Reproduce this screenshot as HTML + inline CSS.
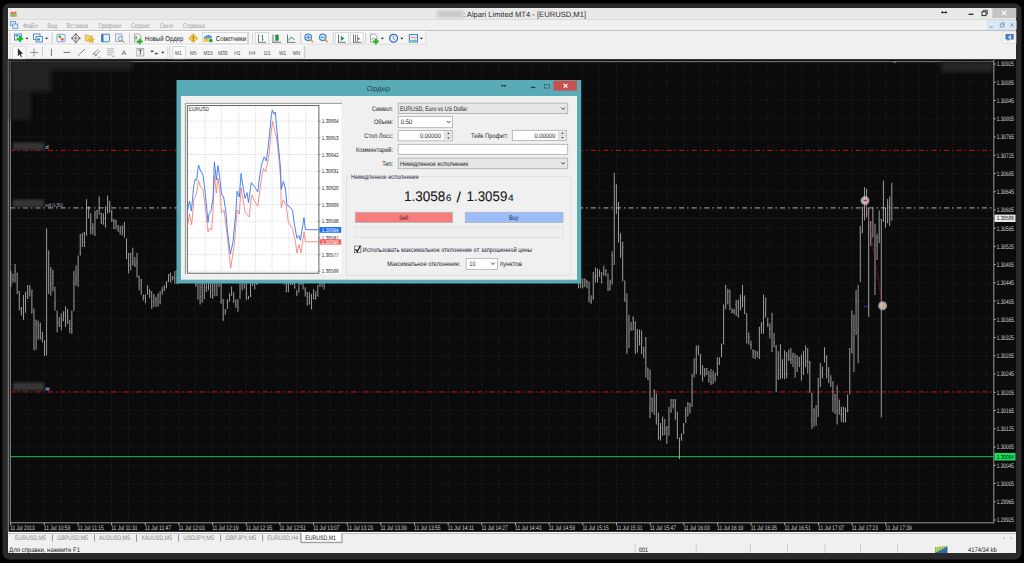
<!DOCTYPE html>
<html><head><meta charset="utf-8"><style>
html,body{margin:0;padding:0;width:1024px;height:563px;overflow:hidden;background:#000}
svg{display:block;position:absolute;left:0;top:0}
</style></head><body>
<svg width="1024" height="563" viewBox="0 0 1024 563" text-rendering="geometricPrecision">
<defs><filter id="blur" x="-20%" y="-20%" width="140%" height="140%"><feGaussianBlur stdDeviation="2.5"/></filter><filter id="blur1" x="-20%" y="-50%" width="140%" height="200%"><feGaussianBlur stdDeviation="1"/></filter><filter id="blur2" x="-20%" y="-50%" width="140%" height="200%"><feGaussianBlur stdDeviation="1.5"/></filter></defs>
<rect x="0" y="0" width="1024" height="563" fill="#000" />
<rect x="2.5" y="3.5" width="1019" height="556" fill="#2a2a2a" rx="7"/>
<rect x="8" y="8" width="1008" height="545" fill="#f0f0f0" />
<rect x="8" y="8" width="1008" height="11.5" fill="#e9e9e9" />
<line x1="8" y1="19.5" x2="1016" y2="19.5" stroke="#dadada" stroke-width="1" />
<line x1="8" y1="30.5" x2="1016" y2="30.5" stroke="#c2c2c2" stroke-width="1" />
<rect x="8" y="59" width="1008" height="473" fill="#0b0b0b" />
<line x1="8" y1="59.5" x2="1016" y2="59.5" stroke="#3a3a3a" stroke-width="1" />
<line x1="7.4" y1="60" x2="7.4" y2="532" stroke="#3c3c3c" stroke-width="1.2" />
<line x1="8.6" y1="60" x2="8.6" y2="532" stroke="#7c7c7c" stroke-width="1" />
<line x1="10.3" y1="61" x2="10.3" y2="523" stroke="#9c9c9c" stroke-width="0.9" />
<line x1="27.43" y1="61" x2="27.43" y2="522.8" stroke="#2c2c2c" stroke-width="0.8" stroke-dasharray="1 2.2"/>
<line x1="44.26" y1="61" x2="44.26" y2="522.8" stroke="#2c2c2c" stroke-width="0.8" stroke-dasharray="1 2.2"/>
<line x1="61.089999999999996" y1="61" x2="61.089999999999996" y2="522.8" stroke="#2c2c2c" stroke-width="0.8" stroke-dasharray="1 2.2"/>
<line x1="77.91999999999999" y1="61" x2="77.91999999999999" y2="522.8" stroke="#2c2c2c" stroke-width="0.8" stroke-dasharray="1 2.2"/>
<line x1="94.74999999999999" y1="61" x2="94.74999999999999" y2="522.8" stroke="#2c2c2c" stroke-width="0.8" stroke-dasharray="1 2.2"/>
<line x1="111.57999999999998" y1="61" x2="111.57999999999998" y2="522.8" stroke="#2c2c2c" stroke-width="0.8" stroke-dasharray="1 2.2"/>
<line x1="128.41" y1="61" x2="128.41" y2="522.8" stroke="#2c2c2c" stroke-width="0.8" stroke-dasharray="1 2.2"/>
<line x1="145.23999999999998" y1="61" x2="145.23999999999998" y2="522.8" stroke="#2c2c2c" stroke-width="0.8" stroke-dasharray="1 2.2"/>
<line x1="162.06999999999996" y1="61" x2="162.06999999999996" y2="522.8" stroke="#2c2c2c" stroke-width="0.8" stroke-dasharray="1 2.2"/>
<line x1="178.89999999999998" y1="61" x2="178.89999999999998" y2="522.8" stroke="#2c2c2c" stroke-width="0.8" stroke-dasharray="1 2.2"/>
<line x1="195.73" y1="61" x2="195.73" y2="522.8" stroke="#2c2c2c" stroke-width="0.8" stroke-dasharray="1 2.2"/>
<line x1="212.55999999999997" y1="61" x2="212.55999999999997" y2="522.8" stroke="#2c2c2c" stroke-width="0.8" stroke-dasharray="1 2.2"/>
<line x1="229.38999999999996" y1="61" x2="229.38999999999996" y2="522.8" stroke="#2c2c2c" stroke-width="0.8" stroke-dasharray="1 2.2"/>
<line x1="246.21999999999997" y1="61" x2="246.21999999999997" y2="522.8" stroke="#2c2c2c" stroke-width="0.8" stroke-dasharray="1 2.2"/>
<line x1="263.05" y1="61" x2="263.05" y2="522.8" stroke="#2c2c2c" stroke-width="0.8" stroke-dasharray="1 2.2"/>
<line x1="279.88" y1="61" x2="279.88" y2="522.8" stroke="#2c2c2c" stroke-width="0.8" stroke-dasharray="1 2.2"/>
<line x1="296.71" y1="61" x2="296.71" y2="522.8" stroke="#2c2c2c" stroke-width="0.8" stroke-dasharray="1 2.2"/>
<line x1="313.53999999999996" y1="61" x2="313.53999999999996" y2="522.8" stroke="#2c2c2c" stroke-width="0.8" stroke-dasharray="1 2.2"/>
<line x1="330.37" y1="61" x2="330.37" y2="522.8" stroke="#2c2c2c" stroke-width="0.8" stroke-dasharray="1 2.2"/>
<line x1="347.2" y1="61" x2="347.2" y2="522.8" stroke="#2c2c2c" stroke-width="0.8" stroke-dasharray="1 2.2"/>
<line x1="364.03" y1="61" x2="364.03" y2="522.8" stroke="#2c2c2c" stroke-width="0.8" stroke-dasharray="1 2.2"/>
<line x1="380.86" y1="61" x2="380.86" y2="522.8" stroke="#2c2c2c" stroke-width="0.8" stroke-dasharray="1 2.2"/>
<line x1="397.69" y1="61" x2="397.69" y2="522.8" stroke="#2c2c2c" stroke-width="0.8" stroke-dasharray="1 2.2"/>
<line x1="414.52" y1="61" x2="414.52" y2="522.8" stroke="#2c2c2c" stroke-width="0.8" stroke-dasharray="1 2.2"/>
<line x1="431.34999999999997" y1="61" x2="431.34999999999997" y2="522.8" stroke="#2c2c2c" stroke-width="0.8" stroke-dasharray="1 2.2"/>
<line x1="448.17999999999995" y1="61" x2="448.17999999999995" y2="522.8" stroke="#2c2c2c" stroke-width="0.8" stroke-dasharray="1 2.2"/>
<line x1="465.01" y1="61" x2="465.01" y2="522.8" stroke="#2c2c2c" stroke-width="0.8" stroke-dasharray="1 2.2"/>
<line x1="481.84" y1="61" x2="481.84" y2="522.8" stroke="#2c2c2c" stroke-width="0.8" stroke-dasharray="1 2.2"/>
<line x1="498.66999999999996" y1="61" x2="498.66999999999996" y2="522.8" stroke="#2c2c2c" stroke-width="0.8" stroke-dasharray="1 2.2"/>
<line x1="515.5" y1="61" x2="515.5" y2="522.8" stroke="#2c2c2c" stroke-width="0.8" stroke-dasharray="1 2.2"/>
<line x1="532.3299999999999" y1="61" x2="532.3299999999999" y2="522.8" stroke="#2c2c2c" stroke-width="0.8" stroke-dasharray="1 2.2"/>
<line x1="549.16" y1="61" x2="549.16" y2="522.8" stroke="#2c2c2c" stroke-width="0.8" stroke-dasharray="1 2.2"/>
<line x1="565.99" y1="61" x2="565.99" y2="522.8" stroke="#2c2c2c" stroke-width="0.8" stroke-dasharray="1 2.2"/>
<line x1="582.8199999999999" y1="61" x2="582.8199999999999" y2="522.8" stroke="#2c2c2c" stroke-width="0.8" stroke-dasharray="1 2.2"/>
<line x1="599.65" y1="61" x2="599.65" y2="522.8" stroke="#2c2c2c" stroke-width="0.8" stroke-dasharray="1 2.2"/>
<line x1="616.4799999999999" y1="61" x2="616.4799999999999" y2="522.8" stroke="#2c2c2c" stroke-width="0.8" stroke-dasharray="1 2.2"/>
<line x1="633.31" y1="61" x2="633.31" y2="522.8" stroke="#2c2c2c" stroke-width="0.8" stroke-dasharray="1 2.2"/>
<line x1="650.14" y1="61" x2="650.14" y2="522.8" stroke="#2c2c2c" stroke-width="0.8" stroke-dasharray="1 2.2"/>
<line x1="666.9699999999999" y1="61" x2="666.9699999999999" y2="522.8" stroke="#2c2c2c" stroke-width="0.8" stroke-dasharray="1 2.2"/>
<line x1="683.8" y1="61" x2="683.8" y2="522.8" stroke="#2c2c2c" stroke-width="0.8" stroke-dasharray="1 2.2"/>
<line x1="700.63" y1="61" x2="700.63" y2="522.8" stroke="#2c2c2c" stroke-width="0.8" stroke-dasharray="1 2.2"/>
<line x1="717.4599999999999" y1="61" x2="717.4599999999999" y2="522.8" stroke="#2c2c2c" stroke-width="0.8" stroke-dasharray="1 2.2"/>
<line x1="734.29" y1="61" x2="734.29" y2="522.8" stroke="#2c2c2c" stroke-width="0.8" stroke-dasharray="1 2.2"/>
<line x1="751.12" y1="61" x2="751.12" y2="522.8" stroke="#2c2c2c" stroke-width="0.8" stroke-dasharray="1 2.2"/>
<line x1="767.9499999999999" y1="61" x2="767.9499999999999" y2="522.8" stroke="#2c2c2c" stroke-width="0.8" stroke-dasharray="1 2.2"/>
<line x1="784.78" y1="61" x2="784.78" y2="522.8" stroke="#2c2c2c" stroke-width="0.8" stroke-dasharray="1 2.2"/>
<line x1="801.6099999999999" y1="61" x2="801.6099999999999" y2="522.8" stroke="#2c2c2c" stroke-width="0.8" stroke-dasharray="1 2.2"/>
<line x1="818.4399999999999" y1="61" x2="818.4399999999999" y2="522.8" stroke="#2c2c2c" stroke-width="0.8" stroke-dasharray="1 2.2"/>
<line x1="835.27" y1="61" x2="835.27" y2="522.8" stroke="#2c2c2c" stroke-width="0.8" stroke-dasharray="1 2.2"/>
<line x1="852.0999999999999" y1="61" x2="852.0999999999999" y2="522.8" stroke="#2c2c2c" stroke-width="0.8" stroke-dasharray="1 2.2"/>
<line x1="868.93" y1="61" x2="868.93" y2="522.8" stroke="#2c2c2c" stroke-width="0.8" stroke-dasharray="1 2.2"/>
<line x1="885.7599999999999" y1="61" x2="885.7599999999999" y2="522.8" stroke="#2c2c2c" stroke-width="0.8" stroke-dasharray="1 2.2"/>
<line x1="902.5899999999999" y1="61" x2="902.5899999999999" y2="522.8" stroke="#2c2c2c" stroke-width="0.8" stroke-dasharray="1 2.2"/>
<line x1="919.42" y1="61" x2="919.42" y2="522.8" stroke="#2c2c2c" stroke-width="0.8" stroke-dasharray="1 2.2"/>
<line x1="936.2499999999999" y1="61" x2="936.2499999999999" y2="522.8" stroke="#2c2c2c" stroke-width="0.8" stroke-dasharray="1 2.2"/>
<line x1="953.0799999999999" y1="61" x2="953.0799999999999" y2="522.8" stroke="#2c2c2c" stroke-width="0.8" stroke-dasharray="1 2.2"/>
<line x1="969.91" y1="61" x2="969.91" y2="522.8" stroke="#2c2c2c" stroke-width="0.8" stroke-dasharray="1 2.2"/>
<line x1="986.7399999999999" y1="61" x2="986.7399999999999" y2="522.8" stroke="#2c2c2c" stroke-width="0.8" stroke-dasharray="1 2.2"/>
<line x1="11" y1="64.0" x2="993.8" y2="64.0" stroke="#2c2c2c" stroke-width="0.8" stroke-dasharray="1 2.2"/>
<line x1="11" y1="82.24" x2="993.8" y2="82.24" stroke="#2c2c2c" stroke-width="0.8" stroke-dasharray="1 2.2"/>
<line x1="11" y1="100.47999999999999" x2="993.8" y2="100.47999999999999" stroke="#2c2c2c" stroke-width="0.8" stroke-dasharray="1 2.2"/>
<line x1="11" y1="118.72" x2="993.8" y2="118.72" stroke="#2c2c2c" stroke-width="0.8" stroke-dasharray="1 2.2"/>
<line x1="11" y1="136.95999999999998" x2="993.8" y2="136.95999999999998" stroke="#2c2c2c" stroke-width="0.8" stroke-dasharray="1 2.2"/>
<line x1="11" y1="155.2" x2="993.8" y2="155.2" stroke="#2c2c2c" stroke-width="0.8" stroke-dasharray="1 2.2"/>
<line x1="11" y1="173.44" x2="993.8" y2="173.44" stroke="#2c2c2c" stroke-width="0.8" stroke-dasharray="1 2.2"/>
<line x1="11" y1="191.68" x2="993.8" y2="191.68" stroke="#2c2c2c" stroke-width="0.8" stroke-dasharray="1 2.2"/>
<line x1="11" y1="209.92" x2="993.8" y2="209.92" stroke="#2c2c2c" stroke-width="0.8" stroke-dasharray="1 2.2"/>
<line x1="11" y1="228.16" x2="993.8" y2="228.16" stroke="#2c2c2c" stroke-width="0.8" stroke-dasharray="1 2.2"/>
<line x1="11" y1="246.39999999999998" x2="993.8" y2="246.39999999999998" stroke="#2c2c2c" stroke-width="0.8" stroke-dasharray="1 2.2"/>
<line x1="11" y1="264.64" x2="993.8" y2="264.64" stroke="#2c2c2c" stroke-width="0.8" stroke-dasharray="1 2.2"/>
<line x1="11" y1="282.88" x2="993.8" y2="282.88" stroke="#2c2c2c" stroke-width="0.8" stroke-dasharray="1 2.2"/>
<line x1="11" y1="301.12" x2="993.8" y2="301.12" stroke="#2c2c2c" stroke-width="0.8" stroke-dasharray="1 2.2"/>
<line x1="11" y1="319.36" x2="993.8" y2="319.36" stroke="#2c2c2c" stroke-width="0.8" stroke-dasharray="1 2.2"/>
<line x1="11" y1="337.59999999999997" x2="993.8" y2="337.59999999999997" stroke="#2c2c2c" stroke-width="0.8" stroke-dasharray="1 2.2"/>
<line x1="11" y1="355.84" x2="993.8" y2="355.84" stroke="#2c2c2c" stroke-width="0.8" stroke-dasharray="1 2.2"/>
<line x1="11" y1="374.08" x2="993.8" y2="374.08" stroke="#2c2c2c" stroke-width="0.8" stroke-dasharray="1 2.2"/>
<line x1="11" y1="392.32" x2="993.8" y2="392.32" stroke="#2c2c2c" stroke-width="0.8" stroke-dasharray="1 2.2"/>
<line x1="11" y1="410.55999999999995" x2="993.8" y2="410.55999999999995" stroke="#2c2c2c" stroke-width="0.8" stroke-dasharray="1 2.2"/>
<line x1="11" y1="428.79999999999995" x2="993.8" y2="428.79999999999995" stroke="#2c2c2c" stroke-width="0.8" stroke-dasharray="1 2.2"/>
<line x1="11" y1="447.03999999999996" x2="993.8" y2="447.03999999999996" stroke="#2c2c2c" stroke-width="0.8" stroke-dasharray="1 2.2"/>
<line x1="11" y1="465.28" x2="993.8" y2="465.28" stroke="#2c2c2c" stroke-width="0.8" stroke-dasharray="1 2.2"/>
<line x1="11" y1="483.52" x2="993.8" y2="483.52" stroke="#2c2c2c" stroke-width="0.8" stroke-dasharray="1 2.2"/>
<line x1="11" y1="501.76" x2="993.8" y2="501.76" stroke="#2c2c2c" stroke-width="0.8" stroke-dasharray="1 2.2"/>
<line x1="11" y1="520.0" x2="993.8" y2="520.0" stroke="#2c2c2c" stroke-width="0.8" stroke-dasharray="1 2.2"/>
<line x1="10" y1="61.6" x2="993.8" y2="61.6" stroke="#8a8a8a" stroke-width="0.9" />
<path d="M893.2 61.2 H896.2 L894.7 63.4Z" fill="#8a8a8a"/>
<g filter="url(#blur)"><rect x="10" y="60" width="122" height="10" fill="#202020"/><rect x="11" y="69" width="40" height="23" fill="#222"/><rect x="11" y="90" width="20" height="30" fill="#1f1f1f"/></g>
<g filter="url(#blur)"><rect x="941" y="62" width="52" height="10" fill="#262626"/></g>
<line x1="993.8" y1="60" x2="993.8" y2="523.3" stroke="#9a9a9a" stroke-width="1" />
<line x1="10" y1="522.8" x2="993.8" y2="522.8" stroke="#9a9a9a" stroke-width="1" />
<line x1="993.8" y1="64.0" x2="995.8" y2="64.0" stroke="#aaa" stroke-width="1" />
<text x="996.7" y="66.41" font-size="6.6" fill="#d4d4d4" text-anchor="start" font-family="Liberation Sans" font-weight="normal" textLength="17.3" lengthAdjust="spacingAndGlyphs" >1.30925</text>
<line x1="993.8" y1="82.24" x2="995.8" y2="82.24" stroke="#aaa" stroke-width="1" />
<text x="996.7" y="84.65" font-size="6.6" fill="#d4d4d4" text-anchor="start" font-family="Liberation Sans" font-weight="normal" textLength="17.3" lengthAdjust="spacingAndGlyphs" >1.30885</text>
<line x1="993.8" y1="100.47999999999999" x2="995.8" y2="100.47999999999999" stroke="#aaa" stroke-width="1" />
<text x="996.7" y="102.89" font-size="6.6" fill="#d4d4d4" text-anchor="start" font-family="Liberation Sans" font-weight="normal" textLength="17.3" lengthAdjust="spacingAndGlyphs" >1.30845</text>
<line x1="993.8" y1="118.72" x2="995.8" y2="118.72" stroke="#aaa" stroke-width="1" />
<text x="996.7" y="121.13" font-size="6.6" fill="#d4d4d4" text-anchor="start" font-family="Liberation Sans" font-weight="normal" textLength="17.3" lengthAdjust="spacingAndGlyphs" >1.30805</text>
<line x1="993.8" y1="136.95999999999998" x2="995.8" y2="136.95999999999998" stroke="#aaa" stroke-width="1" />
<text x="996.7" y="139.37" font-size="6.6" fill="#d4d4d4" text-anchor="start" font-family="Liberation Sans" font-weight="normal" textLength="17.3" lengthAdjust="spacingAndGlyphs" >1.30765</text>
<line x1="993.8" y1="155.2" x2="995.8" y2="155.2" stroke="#aaa" stroke-width="1" />
<text x="996.7" y="157.61" font-size="6.6" fill="#d4d4d4" text-anchor="start" font-family="Liberation Sans" font-weight="normal" textLength="17.3" lengthAdjust="spacingAndGlyphs" >1.30725</text>
<line x1="993.8" y1="173.44" x2="995.8" y2="173.44" stroke="#aaa" stroke-width="1" />
<text x="996.7" y="175.85" font-size="6.6" fill="#d4d4d4" text-anchor="start" font-family="Liberation Sans" font-weight="normal" textLength="17.3" lengthAdjust="spacingAndGlyphs" >1.30685</text>
<line x1="993.8" y1="191.68" x2="995.8" y2="191.68" stroke="#aaa" stroke-width="1" />
<text x="996.7" y="194.09" font-size="6.6" fill="#d4d4d4" text-anchor="start" font-family="Liberation Sans" font-weight="normal" textLength="17.3" lengthAdjust="spacingAndGlyphs" >1.30645</text>
<line x1="993.8" y1="209.92" x2="995.8" y2="209.92" stroke="#aaa" stroke-width="1" />
<text x="996.7" y="212.33" font-size="6.6" fill="#d4d4d4" text-anchor="start" font-family="Liberation Sans" font-weight="normal" textLength="17.3" lengthAdjust="spacingAndGlyphs" >1.30605</text>
<line x1="993.8" y1="228.16" x2="995.8" y2="228.16" stroke="#aaa" stroke-width="1" />
<text x="996.7" y="230.57" font-size="6.6" fill="#d4d4d4" text-anchor="start" font-family="Liberation Sans" font-weight="normal" textLength="17.3" lengthAdjust="spacingAndGlyphs" >1.30565</text>
<line x1="993.8" y1="246.39999999999998" x2="995.8" y2="246.39999999999998" stroke="#aaa" stroke-width="1" />
<text x="996.7" y="248.81" font-size="6.6" fill="#d4d4d4" text-anchor="start" font-family="Liberation Sans" font-weight="normal" textLength="17.3" lengthAdjust="spacingAndGlyphs" >1.30525</text>
<line x1="993.8" y1="264.64" x2="995.8" y2="264.64" stroke="#aaa" stroke-width="1" />
<text x="996.7" y="267.05" font-size="6.6" fill="#d4d4d4" text-anchor="start" font-family="Liberation Sans" font-weight="normal" textLength="17.3" lengthAdjust="spacingAndGlyphs" >1.30485</text>
<line x1="993.8" y1="282.88" x2="995.8" y2="282.88" stroke="#aaa" stroke-width="1" />
<text x="996.7" y="285.29" font-size="6.6" fill="#d4d4d4" text-anchor="start" font-family="Liberation Sans" font-weight="normal" textLength="17.3" lengthAdjust="spacingAndGlyphs" >1.30445</text>
<line x1="993.8" y1="301.12" x2="995.8" y2="301.12" stroke="#aaa" stroke-width="1" />
<text x="996.7" y="303.53" font-size="6.6" fill="#d4d4d4" text-anchor="start" font-family="Liberation Sans" font-weight="normal" textLength="17.3" lengthAdjust="spacingAndGlyphs" >1.30405</text>
<line x1="993.8" y1="319.36" x2="995.8" y2="319.36" stroke="#aaa" stroke-width="1" />
<text x="996.7" y="321.77" font-size="6.6" fill="#d4d4d4" text-anchor="start" font-family="Liberation Sans" font-weight="normal" textLength="17.3" lengthAdjust="spacingAndGlyphs" >1.30365</text>
<line x1="993.8" y1="337.59999999999997" x2="995.8" y2="337.59999999999997" stroke="#aaa" stroke-width="1" />
<text x="996.7" y="340.01" font-size="6.6" fill="#d4d4d4" text-anchor="start" font-family="Liberation Sans" font-weight="normal" textLength="17.3" lengthAdjust="spacingAndGlyphs" >1.30325</text>
<line x1="993.8" y1="355.84" x2="995.8" y2="355.84" stroke="#aaa" stroke-width="1" />
<text x="996.7" y="358.25" font-size="6.6" fill="#d4d4d4" text-anchor="start" font-family="Liberation Sans" font-weight="normal" textLength="17.3" lengthAdjust="spacingAndGlyphs" >1.30285</text>
<line x1="993.8" y1="374.08" x2="995.8" y2="374.08" stroke="#aaa" stroke-width="1" />
<text x="996.7" y="376.49" font-size="6.6" fill="#d4d4d4" text-anchor="start" font-family="Liberation Sans" font-weight="normal" textLength="17.3" lengthAdjust="spacingAndGlyphs" >1.30245</text>
<line x1="993.8" y1="392.32" x2="995.8" y2="392.32" stroke="#aaa" stroke-width="1" />
<text x="996.7" y="394.73" font-size="6.6" fill="#d4d4d4" text-anchor="start" font-family="Liberation Sans" font-weight="normal" textLength="17.3" lengthAdjust="spacingAndGlyphs" >1.30205</text>
<line x1="993.8" y1="410.55999999999995" x2="995.8" y2="410.55999999999995" stroke="#aaa" stroke-width="1" />
<text x="996.7" y="412.97" font-size="6.6" fill="#d4d4d4" text-anchor="start" font-family="Liberation Sans" font-weight="normal" textLength="17.3" lengthAdjust="spacingAndGlyphs" >1.30165</text>
<line x1="993.8" y1="428.79999999999995" x2="995.8" y2="428.79999999999995" stroke="#aaa" stroke-width="1" />
<text x="996.7" y="431.21" font-size="6.6" fill="#d4d4d4" text-anchor="start" font-family="Liberation Sans" font-weight="normal" textLength="17.3" lengthAdjust="spacingAndGlyphs" >1.30125</text>
<line x1="993.8" y1="447.03999999999996" x2="995.8" y2="447.03999999999996" stroke="#aaa" stroke-width="1" />
<text x="996.7" y="449.45" font-size="6.6" fill="#d4d4d4" text-anchor="start" font-family="Liberation Sans" font-weight="normal" textLength="17.3" lengthAdjust="spacingAndGlyphs" >1.30085</text>
<line x1="993.8" y1="465.28" x2="995.8" y2="465.28" stroke="#aaa" stroke-width="1" />
<text x="996.7" y="467.69" font-size="6.6" fill="#d4d4d4" text-anchor="start" font-family="Liberation Sans" font-weight="normal" textLength="17.3" lengthAdjust="spacingAndGlyphs" >1.30045</text>
<line x1="993.8" y1="483.52" x2="995.8" y2="483.52" stroke="#aaa" stroke-width="1" />
<text x="996.7" y="485.93" font-size="6.6" fill="#d4d4d4" text-anchor="start" font-family="Liberation Sans" font-weight="normal" textLength="17.3" lengthAdjust="spacingAndGlyphs" >1.30005</text>
<line x1="993.8" y1="501.76" x2="995.8" y2="501.76" stroke="#aaa" stroke-width="1" />
<text x="996.7" y="504.17" font-size="6.6" fill="#d4d4d4" text-anchor="start" font-family="Liberation Sans" font-weight="normal" textLength="17.3" lengthAdjust="spacingAndGlyphs" >1.29965</text>
<line x1="993.8" y1="520.0" x2="995.8" y2="520.0" stroke="#aaa" stroke-width="1" />
<text x="996.7" y="522.41" font-size="6.6" fill="#d4d4d4" text-anchor="start" font-family="Liberation Sans" font-weight="normal" textLength="17.3" lengthAdjust="spacingAndGlyphs" >1.29925</text>
<line x1="10.6" y1="522.8" x2="10.6" y2="525.3" stroke="#aaa" stroke-width="1" />
<text x="10.2" y="530.01" font-size="6.6" fill="#d4d4d4" text-anchor="start" font-family="Liberation Sans" font-weight="normal" textLength="24.5" lengthAdjust="spacingAndGlyphs" >11 Jul 2013</text>
<line x1="44.26" y1="522.8" x2="44.26" y2="525.3" stroke="#aaa" stroke-width="1" />
<text x="43.86" y="530.01" font-size="6.6" fill="#d4d4d4" text-anchor="start" font-family="Liberation Sans" font-weight="normal" textLength="26.3" lengthAdjust="spacingAndGlyphs" >11 Jul 10:59</text>
<line x1="77.91999999999999" y1="522.8" x2="77.91999999999999" y2="525.3" stroke="#aaa" stroke-width="1" />
<text x="77.51999999999998" y="530.01" font-size="6.6" fill="#d4d4d4" text-anchor="start" font-family="Liberation Sans" font-weight="normal" textLength="26.3" lengthAdjust="spacingAndGlyphs" >11 Jul 11:15</text>
<line x1="111.57999999999998" y1="522.8" x2="111.57999999999998" y2="525.3" stroke="#aaa" stroke-width="1" />
<text x="111.17999999999998" y="530.01" font-size="6.6" fill="#d4d4d4" text-anchor="start" font-family="Liberation Sans" font-weight="normal" textLength="26.3" lengthAdjust="spacingAndGlyphs" >11 Jul 11:31</text>
<line x1="145.23999999999998" y1="522.8" x2="145.23999999999998" y2="525.3" stroke="#aaa" stroke-width="1" />
<text x="144.83999999999997" y="530.01" font-size="6.6" fill="#d4d4d4" text-anchor="start" font-family="Liberation Sans" font-weight="normal" textLength="26.3" lengthAdjust="spacingAndGlyphs" >11 Jul 11:47</text>
<line x1="178.89999999999998" y1="522.8" x2="178.89999999999998" y2="525.3" stroke="#aaa" stroke-width="1" />
<text x="178.49999999999997" y="530.01" font-size="6.6" fill="#d4d4d4" text-anchor="start" font-family="Liberation Sans" font-weight="normal" textLength="26.3" lengthAdjust="spacingAndGlyphs" >11 Jul 12:03</text>
<line x1="212.55999999999997" y1="522.8" x2="212.55999999999997" y2="525.3" stroke="#aaa" stroke-width="1" />
<text x="212.15999999999997" y="530.01" font-size="6.6" fill="#d4d4d4" text-anchor="start" font-family="Liberation Sans" font-weight="normal" textLength="26.3" lengthAdjust="spacingAndGlyphs" >11 Jul 12:19</text>
<line x1="246.21999999999997" y1="522.8" x2="246.21999999999997" y2="525.3" stroke="#aaa" stroke-width="1" />
<text x="245.81999999999996" y="530.01" font-size="6.6" fill="#d4d4d4" text-anchor="start" font-family="Liberation Sans" font-weight="normal" textLength="26.3" lengthAdjust="spacingAndGlyphs" >11 Jul 12:35</text>
<line x1="279.88" y1="522.8" x2="279.88" y2="525.3" stroke="#aaa" stroke-width="1" />
<text x="279.48" y="530.01" font-size="6.6" fill="#d4d4d4" text-anchor="start" font-family="Liberation Sans" font-weight="normal" textLength="26.3" lengthAdjust="spacingAndGlyphs" >11 Jul 12:51</text>
<line x1="313.53999999999996" y1="522.8" x2="313.53999999999996" y2="525.3" stroke="#aaa" stroke-width="1" />
<text x="313.14" y="530.01" font-size="6.6" fill="#d4d4d4" text-anchor="start" font-family="Liberation Sans" font-weight="normal" textLength="26.3" lengthAdjust="spacingAndGlyphs" >11 Jul 13:07</text>
<line x1="347.2" y1="522.8" x2="347.2" y2="525.3" stroke="#aaa" stroke-width="1" />
<text x="346.8" y="530.01" font-size="6.6" fill="#d4d4d4" text-anchor="start" font-family="Liberation Sans" font-weight="normal" textLength="26.3" lengthAdjust="spacingAndGlyphs" >11 Jul 13:23</text>
<line x1="380.86" y1="522.8" x2="380.86" y2="525.3" stroke="#aaa" stroke-width="1" />
<text x="380.46000000000004" y="530.01" font-size="6.6" fill="#d4d4d4" text-anchor="start" font-family="Liberation Sans" font-weight="normal" textLength="26.3" lengthAdjust="spacingAndGlyphs" >11 Jul 13:39</text>
<line x1="414.52" y1="522.8" x2="414.52" y2="525.3" stroke="#aaa" stroke-width="1" />
<text x="414.12" y="530.01" font-size="6.6" fill="#d4d4d4" text-anchor="start" font-family="Liberation Sans" font-weight="normal" textLength="26.3" lengthAdjust="spacingAndGlyphs" >11 Jul 13:55</text>
<line x1="448.17999999999995" y1="522.8" x2="448.17999999999995" y2="525.3" stroke="#aaa" stroke-width="1" />
<text x="447.78" y="530.01" font-size="6.6" fill="#d4d4d4" text-anchor="start" font-family="Liberation Sans" font-weight="normal" textLength="26.3" lengthAdjust="spacingAndGlyphs" >11 Jul 14:11</text>
<line x1="481.84" y1="522.8" x2="481.84" y2="525.3" stroke="#aaa" stroke-width="1" />
<text x="481.44" y="530.01" font-size="6.6" fill="#d4d4d4" text-anchor="start" font-family="Liberation Sans" font-weight="normal" textLength="26.3" lengthAdjust="spacingAndGlyphs" >11 Jul 14:27</text>
<line x1="515.5" y1="522.8" x2="515.5" y2="525.3" stroke="#aaa" stroke-width="1" />
<text x="515.1" y="530.01" font-size="6.6" fill="#d4d4d4" text-anchor="start" font-family="Liberation Sans" font-weight="normal" textLength="26.3" lengthAdjust="spacingAndGlyphs" >11 Jul 14:43</text>
<line x1="549.16" y1="522.8" x2="549.16" y2="525.3" stroke="#aaa" stroke-width="1" />
<text x="548.76" y="530.01" font-size="6.6" fill="#d4d4d4" text-anchor="start" font-family="Liberation Sans" font-weight="normal" textLength="26.3" lengthAdjust="spacingAndGlyphs" >11 Jul 14:59</text>
<line x1="582.8199999999999" y1="522.8" x2="582.8199999999999" y2="525.3" stroke="#aaa" stroke-width="1" />
<text x="582.42" y="530.01" font-size="6.6" fill="#d4d4d4" text-anchor="start" font-family="Liberation Sans" font-weight="normal" textLength="26.3" lengthAdjust="spacingAndGlyphs" >11 Jul 15:15</text>
<line x1="616.4799999999999" y1="522.8" x2="616.4799999999999" y2="525.3" stroke="#aaa" stroke-width="1" />
<text x="616.0799999999999" y="530.01" font-size="6.6" fill="#d4d4d4" text-anchor="start" font-family="Liberation Sans" font-weight="normal" textLength="26.3" lengthAdjust="spacingAndGlyphs" >11 Jul 15:31</text>
<line x1="650.14" y1="522.8" x2="650.14" y2="525.3" stroke="#aaa" stroke-width="1" />
<text x="649.74" y="530.01" font-size="6.6" fill="#d4d4d4" text-anchor="start" font-family="Liberation Sans" font-weight="normal" textLength="26.3" lengthAdjust="spacingAndGlyphs" >11 Jul 15:47</text>
<line x1="683.8" y1="522.8" x2="683.8" y2="525.3" stroke="#aaa" stroke-width="1" />
<text x="683.4" y="530.01" font-size="6.6" fill="#d4d4d4" text-anchor="start" font-family="Liberation Sans" font-weight="normal" textLength="26.3" lengthAdjust="spacingAndGlyphs" >11 Jul 16:03</text>
<line x1="717.4599999999999" y1="522.8" x2="717.4599999999999" y2="525.3" stroke="#aaa" stroke-width="1" />
<text x="717.06" y="530.01" font-size="6.6" fill="#d4d4d4" text-anchor="start" font-family="Liberation Sans" font-weight="normal" textLength="26.3" lengthAdjust="spacingAndGlyphs" >11 Jul 16:19</text>
<line x1="751.12" y1="522.8" x2="751.12" y2="525.3" stroke="#aaa" stroke-width="1" />
<text x="750.72" y="530.01" font-size="6.6" fill="#d4d4d4" text-anchor="start" font-family="Liberation Sans" font-weight="normal" textLength="26.3" lengthAdjust="spacingAndGlyphs" >11 Jul 16:35</text>
<line x1="784.78" y1="522.8" x2="784.78" y2="525.3" stroke="#aaa" stroke-width="1" />
<text x="784.38" y="530.01" font-size="6.6" fill="#d4d4d4" text-anchor="start" font-family="Liberation Sans" font-weight="normal" textLength="26.3" lengthAdjust="spacingAndGlyphs" >11 Jul 16:51</text>
<line x1="818.4399999999999" y1="522.8" x2="818.4399999999999" y2="525.3" stroke="#aaa" stroke-width="1" />
<text x="818.04" y="530.01" font-size="6.6" fill="#d4d4d4" text-anchor="start" font-family="Liberation Sans" font-weight="normal" textLength="26.3" lengthAdjust="spacingAndGlyphs" >11 Jul 17:07</text>
<line x1="852.0999999999999" y1="522.8" x2="852.0999999999999" y2="525.3" stroke="#aaa" stroke-width="1" />
<text x="851.6999999999999" y="530.01" font-size="6.6" fill="#d4d4d4" text-anchor="start" font-family="Liberation Sans" font-weight="normal" textLength="26.3" lengthAdjust="spacingAndGlyphs" >11 Jul 17:23</text>
<line x1="885.7599999999999" y1="522.8" x2="885.7599999999999" y2="525.3" stroke="#aaa" stroke-width="1" />
<text x="885.3599999999999" y="530.01" font-size="6.6" fill="#d4d4d4" text-anchor="start" font-family="Liberation Sans" font-weight="normal" textLength="26.3" lengthAdjust="spacingAndGlyphs" >11 Jul 17:39</text>
<line x1="10.2" y1="150.4" x2="993.8" y2="150.4" stroke="#a41010" stroke-width="1.1" stroke-dasharray="5.1 2.85 1.6 3.07"/>
<line x1="10.2" y1="207.8" x2="993.8" y2="207.8" stroke="#8c8c8c" stroke-width="1.3" stroke-dasharray="5.1 2.85 1.6 3.07"/>
<line x1="10.2" y1="391.9" x2="993.8" y2="391.9" stroke="#a41010" stroke-width="1.1" stroke-dasharray="5.1 2.85 1.6 3.07"/>
<line x1="11" y1="456.6" x2="993.8" y2="456.6" stroke="#1e9c4a" stroke-width="1.3" />
<line x1="11" y1="218.5" x2="993.8" y2="218.5" stroke="#191919" stroke-width="1.2" />
<g filter="url(#blur1)"><rect x="13" y="142.5" width="31" height="7.5" fill="#363636"/><rect x="13" y="199.5" width="31" height="7.5" fill="#363636"/><rect x="13" y="382.5" width="31" height="8" fill="#363636"/></g>
<text x="45.3" y="148.70" font-size="5.5" fill="#c8c8c8" text-anchor="start" font-family="Liberation Sans" font-weight="normal" textLength="3.4" lengthAdjust="spacingAndGlyphs" >d</text>
<text x="45.3" y="207.30" font-size="5.5" fill="#b0b8c8" text-anchor="start" font-family="Liberation Sans" font-weight="normal" textLength="17.4" lengthAdjust="spacingAndGlyphs" >xd 0.50</text>
<path d="M45.5 387.5 h4 v3 h-4z" fill="#5a7ab0"/>
<rect x="994.5" y="214.6" width="21" height="7.4" fill="#e8e8e8" />
<text x="996.7" y="220.49" font-size="6" fill="#111" text-anchor="start" font-family="Liberation Sans" font-weight="normal" textLength="17.3" lengthAdjust="spacingAndGlyphs" >1.30586</text>
<rect x="994.5" y="452.9" width="21" height="7.6" fill="#19e060" />
<text x="996.7" y="458.79" font-size="6" fill="#0b0b0b" text-anchor="start" font-family="Liberation Sans" font-weight="normal" textLength="17.3" lengthAdjust="spacingAndGlyphs" >1.30064</text>
<path d="M10.86 271.0V287.0M12.96 274.0V282.5M15.06 264.0V282.5M17.17 272.6V294.0M19.27 291.0V310.5M21.37 307.0V315.5M23.48 295.0V319.8M25.58 291.7V312.7M27.68 285.0V299.0M29.78 285.0V296.7M31.88 289.6V313.4M33.99 308.4V350.3M36.09 319.8V349.6M38.19 320.5V339.7M40.30 322.6V339.7M42.40 331.8V342.5M44.50 340.4V356.0M46.60 228.5V355.3M48.70 250.5V294.0M50.81 267.0V295.6M52.91 269.7V291.4M55.01 286.8V310.5M57.12 310.5V332.4M59.22 317.0V326.9M61.32 313.4V330.4M63.42 311.2V321.2M65.53 306.3V326.9M67.63 309.0V324.0M69.73 319.8V333.3M71.83 310.5V334.0M73.94 271.0V311.2M76.04 265.5V285.8M78.14 255.5V286.8M80.24 234.0V255.5M82.34 232.8V247.0M84.45 232.0V247.0M86.55 199.2V235.4M88.65 206.3V218.4M90.75 213.1V234.3M92.86 223.4V234.7M94.96 210.6V236.0M97.06 209.9V219.0M99.17 196.4V214.8M101.27 212.7V224.0M103.37 213.4V224.8M105.47 206.3V227.6M107.58 195.7V213.4M109.68 200.6V212.7M111.78 209.9V221.9M113.88 219.0V229.0M115.98 220.0V229.5M118.09 224.8V231.9M120.19 226.2V234.7M122.29 225.5V235.4M124.39 221.9V237.6M126.50 238.3V258.9M128.60 252.8V273.4M130.70 252.8V270.5M132.81 247.8V265.6M134.91 257.0V267.0M137.01 252.8V277.6M139.11 275.5V290.4M141.21 279.0V294.7M143.32 294.7V300.4M145.42 294.7V303.2M147.52 285.5V294.7M149.62 289.0V298.2M151.73 291.1V308.9M153.83 294.0V306.8M155.93 296.8V306.8M158.04 293.3V306.8M160.14 291.0V304.0M162.24 286.9V294.7M164.34 285.7V291.1M166.44 281.2V288.3M168.55 274.0V282.0M170.65 272.7V282.6M172.75 276.2V280.5M174.86 271.2V284.0M176.96 270.0V284.0M195.88 270.0V286.9M197.98 270.0V299.6M200.08 270.0V304.6M202.19 270.0V302.9M204.29 276.0V299.3M206.39 270.0V291.8M208.50 270.0V290.4M210.60 270.0V298.0M212.70 270.0V298.9M214.80 270.0V296.2M216.91 270.0V295.8M219.01 270.0V286.9M221.11 270.0V303.8M223.21 298.9V320.6M225.31 309.0V314.4M227.42 299.3V309.0M229.52 293.5V301.5M231.62 286.4V295.8M233.73 292.2V302.9M235.83 299.3V307.8M237.93 299.3V311.7M240.03 270.0V298.9M242.13 270.0V290.4M244.24 270.0V288.7M246.34 270.0V299.8M248.44 295.8V299.3M250.55 270.0V297.1M252.65 270.0V286.0M254.75 270.0V289.5M256.85 270.0V285.1M284.19 270.0V284.7M286.29 270.0V292.2M288.39 270.0V292.2M290.49 270.0V285.1M292.60 270.0V285.1M294.70 270.0V288.7M296.80 290.0V295.8M298.90 270.0V292.7M301.00 270.0V285.0M303.11 270.0V289.5M305.21 287.3V296.6M307.31 291.8V305.5M309.42 292.2V304.6M311.52 294.0V309.5M313.62 289.1V299.3M315.72 291.3V299.8M317.83 285.1V296.6M319.93 270.0V286.9M322.03 270.0V286.9M324.13 270.0V289.5M578.53 270.0V288.3M580.64 274.2V288.3M582.74 278.4V288.3M584.84 278.4V286.9M586.95 279.8V288.3M589.05 281.5V302.3M591.15 295.4V303.9M593.25 272.0V299.7M595.36 267.7V282.6M597.46 268.4V282.6M599.56 269.8V277.0M601.66 272.0V283.3M603.76 265.6V275.5M605.87 269.1V276.2M607.97 273.4V291.1M610.07 279.8V290.4M612.18 251.4V284.7M614.28 172.8V264.9M616.38 184.2V214.0M618.48 202.0V242.8M620.59 233.2V257.8M622.69 241.7V281.2M624.79 280.5V301.8M626.89 293.3V354.0M629.00 315.0V348.3M631.10 322.0V330.5M633.20 316.3V330.5M635.30 321.3V354.0M637.40 329.0V352.6M639.51 329.8V345.5M641.61 330.5V354.0M643.71 346.9V358.2M645.82 337.0V377.4M647.92 367.5V380.0M650.02 369.6V418.2M652.12 397.4V412.6M654.23 389.4V415.0M656.33 393.4V424.6M658.43 412.6V439.8M660.53 423.0V440.6M662.63 416.6V435.8M664.74 419.0V435.0M666.84 426.2V443.8M668.94 407.0V435.8M671.05 399.0V412.6M673.15 399.0V408.6M675.25 399.0V419.8M677.35 411.8V439.0M679.46 437.4V459.0M681.56 433.4V440.6M683.66 423.0V434.2M685.76 407.0V423.0M687.87 402.2V416.6M689.97 403.0V413.4M692.07 373.8V407.0M694.17 358.2V377.4M696.27 345.4V373.9M698.38 345.4V355.3M700.48 354.2V374.8M702.58 365.0V381.6M704.69 368.0V376.8M706.79 368.0V374.8M708.89 370.9V382.6M710.99 369.0V385.0M713.10 370.4V384.1M715.20 372.8V381.6M717.30 357.2V375.8M719.40 357.2V365.0M721.50 343.5V357.2M723.61 304.4V344.5M725.71 284.8V309.2M727.81 288.7V304.4M729.92 289.7V310.2M732.02 308.3V313.2M734.12 309.2V314.1M736.22 300.0V316.0M738.33 299.7V317.6M740.43 294.6V310.2M742.53 284.8V307.3M744.63 295.5V314.1M746.74 313.2V343.5M748.84 332.7V344.5M750.94 340.6V349.4M753.04 349.4V358.2M755.14 350.3V359.1M757.25 351.3V357.2M759.35 326.9V359.1M761.45 322.0V333.7M763.56 294.6V333.7M765.66 297.5V317.6M767.76 317.6V326.9M769.86 323.2V338.5M771.97 312.8V352.0M774.07 332.8V347.2M776.17 344.8V392.0M778.27 351.2V380.0M780.38 344.0V379.2M782.48 359.2V378.4M784.58 350.4V379.2M786.68 352.0V378.4M788.79 349.6V360.8M790.89 348.0V364.0M792.99 352.8V367.2M795.09 353.6V377.6M797.20 355.2V372.0M799.30 356.8V367.2M801.40 354.4V380.6M803.50 351.2V375.2M805.61 345.6V367.1M807.71 348.0V373.6M809.81 360.8V392.7M811.91 392.7V428.9M814.01 408.3V426.8M816.12 405.1V425.7M818.22 377.8V416.8M820.32 362.8V387.2M822.43 366.4V378.4M824.53 347.2V362.4M826.63 355.2V378.4M828.73 367.1V383.2M830.84 375.2V387.0M832.94 381.3V412.2M835.04 394.0V414.0M837.14 385.4V424.6M839.25 399.6V414.7M841.35 406.7V421.8M843.45 406.7V422.7M845.55 407.6V422.5M847.65 394.3V412.0M849.76 348.0V394.3M851.86 310.4V353.4M853.96 314.6V372.0M856.07 289.8V335.0M858.17 284.8V363.2M860.27 226.0V282.0M862.37 206.3V233.2M864.48 187.1V220.5M866.58 188.5V217.6M868.68 207.7V316.8M870.78 221.2V246.0M872.88 207.7V237.5M874.99 223.7V295.0M877.09 234.0V260.0M879.19 210.5V243.2M881.30 219.0V417.4M883.40 180.7V221.9M885.50 207.7V227.6M887.60 199.1V223.3M889.71 196.3V226.1M891.81 182.8V220.5" stroke="#b6b6b6" stroke-width="0.85" fill="none"/>
<path d="M9.96 276.2H10.86M10.86 273.4H11.76M12.06 279.5H12.96M12.96 274.6H13.86M14.16 273.9H15.06M15.06 270.8H15.96M16.27 273.8H17.17M17.17 283.5H18.07M18.37 291.7H19.27M19.27 299.5H20.17M20.47 307.6H21.37M21.37 307.8H22.27M22.58 305.5H23.48M23.48 315.5H24.38M24.68 294.3H25.58M25.58 296.4H26.48M26.78 293.8H27.68M27.68 298.3H28.58M28.88 291.8H29.78M29.78 289.6H30.68M30.98 312.8H31.88M31.88 290.7H32.78M33.09 344.4H33.99M33.99 320.5H34.89M35.19 324.1H36.09M36.09 323.3H36.99M37.29 326.4H38.19M38.19 336.2H39.09M39.40 325.7H40.30M40.30 332.5H41.20M41.50 338.6H42.40M42.40 335.8H43.30M43.60 348.9H44.50M44.50 341.4H45.40M45.70 236.1H46.60M46.60 254.6H47.50M47.80 280.1H48.70M48.70 269.1H49.60M49.91 276.0H50.81M50.81 283.7H51.71M52.01 279.5H52.91M52.91 276.2H53.81M54.11 305.6H55.01M55.01 303.4H55.91M56.22 315.9H57.12M57.12 323.1H58.02M58.32 322.2H59.22M59.22 325.7H60.12M60.42 325.8H61.32M61.32 318.3H62.22M62.52 321.0H63.42M63.42 312.4H64.32M64.62 314.9H65.53M65.53 321.9H66.43M66.73 311.3H67.63M67.63 316.3H68.53M68.83 320.3H69.73M69.73 328.8H70.63M70.93 328.5H71.83M71.83 324.0H72.73M73.03 306.2H73.94M73.94 283.6H74.84M75.14 279.6H76.04M76.04 277.5H76.94M77.24 273.7H78.14M78.14 269.8H79.04M79.34 252.1H80.24M80.24 254.3H81.14M81.44 239.5H82.34M82.34 242.2H83.25M83.55 232.9H84.45M84.45 242.5H85.35M85.65 222.6H86.55M86.55 235.2H87.45M87.75 216.2H88.65M88.65 209.7H89.55M89.85 221.3H90.75M90.75 227.3H91.66M91.96 223.7H92.86M92.86 228.6H93.76M94.06 214.9H94.96M94.96 213.6H95.86M96.16 210.4H97.06M97.06 216.9H97.96M98.27 198.8H99.17M99.17 201.0H100.07M100.37 217.1H101.27M101.27 222.5H102.17M102.47 214.3H103.37M103.37 218.5H104.27M104.57 218.0H105.47M105.47 225.1H106.37M106.67 210.2H107.58M107.58 211.0H108.48M108.78 204.0H109.68M109.68 205.6H110.58M110.88 214.2H111.78M111.78 220.5H112.68M112.98 228.6H113.88M113.88 220.5H114.78M115.08 221.7H115.98M115.98 222.2H116.89M117.19 226.5H118.09M118.09 228.2H118.99M119.29 231.2H120.19M120.19 228.4H121.09M121.39 225.5H122.29M122.29 229.6H123.19M123.49 227.7H124.39M124.39 230.8H125.30M125.60 257.9H126.50M126.50 252.5H127.40M127.70 263.4H128.60M128.60 265.5H129.50M129.80 264.8H130.70M130.70 253.8H131.60M131.91 263.8H132.81M132.81 261.7H133.71M134.01 265.7H134.91M134.91 265.0H135.81M136.11 262.5H137.01M137.01 262.7H137.91M138.21 277.0H139.11M139.11 285.0H140.01M140.31 280.0H141.21M141.21 280.1H142.11M142.42 295.9H143.32M143.32 295.6H144.22M144.52 297.6H145.42M145.42 295.1H146.32M146.62 285.5H147.52M147.52 286.9H148.42M148.72 289.9H149.62M149.62 292.3H150.53M150.83 291.6H151.73M151.73 306.7H152.63M152.93 301.9H153.83M153.83 295.9H154.73M155.03 299.3H155.93M155.93 300.3H156.83M157.14 298.2H158.04M158.04 295.0H158.94M159.24 302.0H160.14M160.14 303.9H161.04M161.34 290.5H162.24M162.24 290.7H163.14M163.44 286.1H164.34M164.34 286.2H165.24M165.54 283.6H166.44M166.44 283.1H167.34M167.65 280.6H168.55M168.55 275.3H169.45M169.75 272.9H170.65M170.65 282.1H171.55M171.85 278.5H172.75M172.75 276.8H173.65M173.96 278.2H174.86M174.86 271.5H175.76M176.06 277.4H176.96M176.96 283.7H177.86M194.98 284.6H195.88M195.88 281.8H196.78M197.08 277.7H197.98M197.98 280.8H198.88M199.18 275.8H200.08M200.08 296.7H200.98M201.29 287.5H202.19M202.19 295.6H203.09M203.39 283.7H204.29M204.29 281.2H205.19M205.49 287.7H206.39M206.39 291.5H207.29M207.59 287.4H208.50M208.50 286.4H209.40M209.70 292.9H210.60M210.60 290.7H211.50M211.80 276.6H212.70M212.70 285.0H213.60M213.90 279.3H214.80M214.80 270.8H215.70M216.01 270.7H216.91M216.91 277.2H217.81M218.11 274.4H219.01M219.01 281.7H219.91M220.21 302.3H221.11M221.11 285.1H222.01M222.31 319.2H223.21M223.21 320.3H224.11M224.41 314.2H225.31M225.31 311.0H226.22M226.52 301.4H227.42M227.42 301.5H228.32M228.62 295.1H229.52M229.52 295.1H230.42M230.72 292.3H231.62M231.62 294.9H232.52M232.83 301.2H233.73M233.73 297.3H234.63M234.93 304.9H235.83M235.83 306.1H236.73M237.03 300.4H237.93M237.93 307.5H238.83M239.13 296.3H240.03M240.03 292.6H240.93M241.23 285.3H242.13M242.13 279.8H243.03M243.34 273.3H244.24M244.24 284.8H245.14M245.44 279.9H246.34M246.34 293.9H247.24M247.54 299.2H248.44M248.44 297.2H249.34M249.65 280.9H250.55M250.55 295.7H251.45M251.75 281.6H252.65M252.65 272.7H253.55M253.85 272.5H254.75M254.75 272.9H255.65M255.95 283.7H256.85M256.85 282.2H257.75M283.29 272.1H284.19M284.19 282.1H285.08M285.39 291.8H286.29M286.29 284.6H287.19M287.49 277.8H288.39M288.39 282.2H289.29M289.59 272.0H290.49M290.49 270.2H291.39M291.70 284.7H292.60M292.60 279.8H293.50M293.80 279.8H294.70M294.70 287.5H295.60M295.90 292.5H296.80M296.80 295.1H297.70M298.00 288.8H298.90M298.90 274.8H299.80M300.11 273.8H301.00M301.00 274.4H301.90M302.21 274.7H303.11M303.11 281.4H304.01M304.31 289.7H305.21M305.21 291.2H306.11M306.41 293.6H307.31M307.31 304.3H308.21M308.52 296.6H309.42M309.42 297.9H310.31M310.62 303.0H311.52M311.52 308.0H312.42M312.72 293.4H313.62M313.62 298.5H314.52M314.82 295.6H315.72M315.72 295.8H316.62M316.93 291.1H317.83M317.83 285.3H318.73M319.03 277.4H319.93M319.93 273.1H320.83M321.13 270.1H322.03M322.03 283.5H322.93M323.23 273.4H324.13M324.13 279.2H325.03M577.63 283.3H578.53M578.53 280.2H579.43M579.74 278.8H580.64M580.64 281.5H581.54M581.84 283.9H582.74M582.74 286.2H583.64M583.94 279.3H584.84M584.84 283.2H585.74M586.05 281.9H586.95M586.95 282.2H587.85M588.15 297.6H589.05M589.05 292.1H589.95M590.25 300.2H591.15M591.15 301.9H592.05M592.35 297.3H593.25M593.25 284.3H594.15M594.46 276.8H595.36M595.36 275.2H596.25M596.56 275.7H597.46M597.46 278.2H598.36M598.66 273.1H599.56M599.56 273.6H600.46M600.76 277.4H601.66M601.66 282.6H602.56M602.87 272.5H603.76M603.76 274.3H604.66M604.97 275.8H605.87M605.87 270.9H606.77M607.07 283.3H607.97M607.97 290.1H608.87M609.17 288.7H610.07M610.07 281.3H610.97M611.28 255.5H612.18M612.18 266.1H613.08M613.38 179.5H614.28M614.28 195.0H615.18M615.48 186.4H616.38M616.38 204.2H617.28M617.58 234.0H618.48M618.48 238.6H619.38M619.69 237.0H620.59M620.59 250.8H621.49M621.79 267.8H622.69M622.69 247.3H623.59M623.89 299.3H624.79M624.79 301.1H625.69M625.99 306.6H626.89M626.89 351.1H627.79M628.10 328.3H629.00M629.00 331.2H629.89M630.20 330.4H631.10M631.10 329.1H632.00M632.30 318.6H633.20M633.20 322.4H634.10M634.40 338.2H635.30M635.30 332.4H636.20M636.50 333.6H637.40M637.40 336.5H638.30M638.61 341.1H639.51M639.51 330.1H640.41M640.71 343.5H641.61M641.61 340.9H642.51M642.81 347.1H643.71M643.71 350.6H644.61M644.92 362.2H645.82M645.82 357.7H646.72M647.02 368.3H647.92M647.92 379.8H648.82M649.12 407.9H650.02M650.02 416.8H650.92M651.22 399.0H652.12M652.12 401.4H653.02M653.33 390.4H654.23M654.23 409.3H655.12M655.43 401.8H656.33M656.33 397.4H657.23M657.53 424.1H658.43M658.43 437.4H659.33M659.63 437.4H660.53M660.53 427.6H661.43M661.74 419.5H662.63M662.63 434.2H663.53M663.84 428.1H664.74M664.74 430.2H665.64M665.94 427.8H666.84M666.84 427.2H667.74M668.04 426.8H668.94M668.94 419.2H669.84M670.15 400.0H671.05M671.05 411.8H671.95M672.25 405.1H673.15M673.15 406.7H674.05M674.35 400.7H675.25M675.25 416.8H676.15M676.45 413.6H677.35M677.35 435.3H678.25M678.56 447.2H679.46M679.46 444.7H680.36M680.66 437.4H681.56M681.56 440.1H682.46M682.76 426.0H683.66M683.66 424.4H684.56M684.86 415.4H685.76M685.76 410.8H686.66M686.97 403.8H687.87M687.87 404.5H688.76M689.07 403.5H689.97M689.97 405.1H690.87M691.17 384.2H692.07M692.07 383.9H692.97M693.27 372.8H694.17M694.17 363.8H695.07M695.38 359.7H696.27M696.27 350.5H697.17M697.48 348.8H698.38M698.38 345.6H699.28M699.58 359.4H700.48M700.48 354.5H701.38M701.68 377.2H702.58M702.58 374.1H703.48M703.79 369.7H704.69M704.69 372.2H705.59M705.89 374.4H706.79M706.79 368.7H707.69M707.99 380.5H708.89M708.89 376.0H709.79M710.09 376.9H710.99M710.99 382.4H711.89M712.20 375.8H713.10M713.10 377.4H714.00M714.30 378.9H715.20M715.20 381.4H716.10M716.40 363.6H717.30M717.30 372.7H718.20M718.50 362.7H719.40M719.40 362.2H720.30M720.61 349.0H721.50M721.50 348.3H722.40M722.71 306.6H723.61M723.61 309.6H724.51M724.81 286.5H725.71M725.71 302.9H726.61M726.91 292.7H727.81M727.81 291.3H728.71M729.02 291.4H729.92M729.92 306.9H730.82M731.12 312.6H732.02M732.02 311.6H732.92M733.22 310.6H734.12M734.12 310.4H735.02M735.32 304.7H736.22M736.22 307.4H737.12M737.43 302.5H738.33M738.33 307.6H739.23M739.53 298.7H740.43M740.43 309.6H741.33M741.63 306.7H742.53M742.53 297.1H743.43M743.73 300.0H744.63M744.63 313.5H745.53M745.84 322.6H746.74M746.74 324.0H747.63M747.94 332.7H748.84M748.84 337.2H749.74M750.04 344.8H750.94M750.94 345.0H751.84M752.14 351.2H753.04M753.04 353.8H753.94M754.25 350.3H755.14M755.14 352.6H756.04M756.35 351.8H757.25M757.25 353.7H758.15M758.45 328.2H759.35M759.35 327.6H760.25M760.55 325.6H761.45M761.45 324.7H762.35M762.66 317.5H763.56M763.56 315.3H764.46M764.76 312.6H765.66M765.66 310.7H766.56M766.86 324.3H767.76M767.76 325.8H768.66M768.96 329.2H769.86M769.86 328.2H770.76M771.07 351.4H771.97M771.97 318.7H772.87M773.17 343.2H774.07M774.07 342.1H774.97M775.27 346.9H776.17M776.17 384.2H777.07M777.37 376.9H778.27M778.27 369.3H779.17M779.48 369.8H780.38M780.38 372.6H781.27M781.58 361.9H782.48M782.48 369.3H783.38M783.68 364.9H784.58M784.58 374.4H785.48M785.78 373.2H786.68M786.68 373.8H787.58M787.89 356.1H788.79M788.79 359.6H789.69M789.99 358.9H790.89M790.89 359.1H791.79M792.09 356.1H792.99M792.99 353.2H793.89M794.19 356.8H795.09M795.09 362.3H795.99M796.30 357.0H797.20M797.20 369.2H798.10M798.40 362.6H799.30M799.30 363.3H800.20M800.50 370.8H801.40M801.40 372.2H802.30M802.60 362.9H803.50M803.50 351.3H804.40M804.71 362.8H805.61M805.61 361.7H806.50M806.81 360.9H807.71M807.71 361.7H808.61M808.91 381.8H809.81M809.81 362.9H810.71M811.01 419.4H811.91M811.91 401.8H812.81M813.12 409.7H814.01M814.01 413.2H814.91M815.22 420.1H816.12M816.12 409.3H817.02M817.32 406.7H818.22M818.22 415.9H819.12M819.42 374.9H820.32M820.32 372.1H821.22M821.53 372.1H822.43M822.43 374.6H823.33M823.63 358.9H824.53M824.53 356.6H825.43M825.73 370.1H826.63M826.63 357.0H827.53M827.83 369.5H828.73M828.73 371.2H829.63M829.94 384.0H830.84M830.84 378.8H831.74M832.04 398.9H832.94M832.94 381.7H833.84M834.14 395.2H835.04M835.04 399.4H835.94M836.24 411.7H837.14M837.14 412.5H838.04M838.35 409.8H839.25M839.25 404.0H840.14M840.45 414.5H841.35M841.35 413.7H842.25M842.55 414.2H843.45M843.45 408.6H844.35M844.65 420.9H845.55M845.55 410.6H846.45M846.75 411.6H847.65M847.65 410.9H848.55M848.86 348.8H849.76M849.76 369.3H850.66M850.96 345.7H851.86M851.86 352.0H852.76M853.06 340.4H853.96M853.96 330.0H854.86M855.17 299.3H856.07M856.07 332.5H856.97M857.27 301.3H858.17M858.17 330.4H859.07M859.37 233.9H860.27M860.27 255.3H861.17M861.47 231.9H862.37M862.37 209.9H863.27M863.58 214.5H864.48M864.48 204.1H865.38M865.68 214.3H866.58M866.58 209.0H867.48M867.78 232.9H868.68M868.68 305.6H869.58M869.88 233.3H870.78M870.78 221.8H871.68M871.99 207.8H872.88M872.88 222.4H873.78M874.09 255.8H874.99M874.99 245.2H875.89M876.19 237.7H877.09M877.09 242.9H877.99M878.29 220.8H879.19M879.19 238.0H880.09M880.40 219.3H881.30M881.30 367.9H882.20M882.50 215.3H883.40M883.40 185.6H884.30M884.60 226.1H885.50M885.50 221.9H886.40M886.70 220.9H887.60M887.60 206.1H888.50M888.81 207.4H889.71M889.71 208.0H890.61M890.91 220.5H891.81M891.81 205.0H892.71" stroke="#b6b6b6" stroke-width="0.7" fill="none" opacity="0.6"/>
<line x1="865.5" y1="200.6" x2="882.6" y2="305.6" stroke="#e02020" stroke-width="0.8" stroke-dasharray="1.2 1.2"/>
<circle cx="865" cy="200.6" r="4.5" fill="#b8b8b8" opacity="0.8"/><circle cx="865" cy="200.6" r="3" fill="#d0d0d0" opacity="0.6"/><path d="M863.3 200.2 L866.5 199.5 L867.2 201.3 L864.5 201.4Z" fill="#e82020"/>
<circle cx="882.6" cy="305.8" r="4.5" fill="#b8b8b8" opacity="0.8"/><circle cx="882.6" cy="305.8" r="3" fill="#d0d0d0" opacity="0.6"/><path d="M882.2 303.8 L883.8 305.8 L882.2 307.8Z" fill="#f0a010"/>
<line x1="864" y1="306.5" x2="868" y2="306.5" stroke="#2030c0" stroke-width="1" />
<rect x="8" y="532" width="1008" height="21" fill="#f0f0f0" />
<line x1="8" y1="532.3" x2="1016" y2="532.3" stroke="#ffffff" stroke-width="0.8" />
<line x1="8" y1="533.4" x2="1016" y2="533.4" stroke="#a8a8a8" stroke-width="0.7" />
<rect x="8" y="543" width="1008" height="10" fill="#f0f0f0" />
<text x="15.0" y="540.13" font-size="6.4" fill="#8a8a8a" text-anchor="start" font-family="Liberation Sans" font-weight="normal" textLength="31" lengthAdjust="spacingAndGlyphs" >EURUSD,M5</text>
<line x1="52.400000000000006" y1="534.5" x2="52.400000000000006" y2="541.5" stroke="#8a8a8a" stroke-width="0.9" />
<text x="57.05" y="540.13" font-size="6.4" fill="#8a8a8a" text-anchor="start" font-family="Liberation Sans" font-weight="normal" textLength="31" lengthAdjust="spacingAndGlyphs" >GBPUSD,M5</text>
<line x1="94.45" y1="534.5" x2="94.45" y2="541.5" stroke="#8a8a8a" stroke-width="0.9" />
<text x="99.1" y="540.13" font-size="6.4" fill="#8a8a8a" text-anchor="start" font-family="Liberation Sans" font-weight="normal" textLength="31" lengthAdjust="spacingAndGlyphs" >AUDUSD,M5</text>
<line x1="136.5" y1="534.5" x2="136.5" y2="541.5" stroke="#8a8a8a" stroke-width="0.9" />
<text x="141.15" y="540.13" font-size="6.4" fill="#8a8a8a" text-anchor="start" font-family="Liberation Sans" font-weight="normal" textLength="31" lengthAdjust="spacingAndGlyphs" >XAUUSD,M5</text>
<line x1="178.55" y1="534.5" x2="178.55" y2="541.5" stroke="#8a8a8a" stroke-width="0.9" />
<text x="183.2" y="540.13" font-size="6.4" fill="#8a8a8a" text-anchor="start" font-family="Liberation Sans" font-weight="normal" textLength="31" lengthAdjust="spacingAndGlyphs" >USDJPY,M5</text>
<line x1="220.59999999999997" y1="534.5" x2="220.59999999999997" y2="541.5" stroke="#8a8a8a" stroke-width="0.9" />
<text x="225.25" y="540.13" font-size="6.4" fill="#8a8a8a" text-anchor="start" font-family="Liberation Sans" font-weight="normal" textLength="31" lengthAdjust="spacingAndGlyphs" >GBPJPY,M5</text>
<line x1="262.65" y1="534.5" x2="262.65" y2="541.5" stroke="#8a8a8a" stroke-width="0.9" />
<text x="267.3" y="540.13" font-size="6.4" fill="#8a8a8a" text-anchor="start" font-family="Liberation Sans" font-weight="normal" textLength="31" lengthAdjust="spacingAndGlyphs" >EURUSD,H4</text>
<line x1="304.7" y1="534.5" x2="304.7" y2="541.5" stroke="#8a8a8a" stroke-width="0.9" />
<rect x="300.7" y="532.6" width="41.6" height="9.9" fill="#ffffff" />
<path d="M300.9 533 V542.3 H342 V533" fill="none" stroke="#6a6a6a" stroke-width="0.9"/><path d="M301.5 543 H342.6 V533.5" fill="none" stroke="#c8c8c8" stroke-width="0.7"/>
<text x="305.3" y="540.13" font-size="6.4" fill="#1a1a1a" text-anchor="start" font-family="Liberation Sans" font-weight="normal" textLength="30.7" lengthAdjust="spacingAndGlyphs" >EURUSD,M1</text>
<text x="1003" y="540.19" font-size="6" fill="#777" text-anchor="start" font-family="Liberation Sans" font-weight="normal" >‹</text>
<text x="1010" y="540.19" font-size="6" fill="#777" text-anchor="start" font-family="Liberation Sans" font-weight="normal" >›</text>
<text x="9.1" y="552.01" font-size="6.6" fill="#1a1a1a" text-anchor="start" font-family="Liberation Sans" font-weight="normal" textLength="70.9" lengthAdjust="spacingAndGlyphs" >Для справки, нажмите F1</text>
<line x1="635.2" y1="544" x2="635.2" y2="553" stroke="#c8c8c8" stroke-width="0.9" />
<line x1="696.3" y1="544" x2="696.3" y2="553" stroke="#c8c8c8" stroke-width="0.9" />
<line x1="750.4" y1="544" x2="750.4" y2="553" stroke="#c8c8c8" stroke-width="0.9" />
<line x1="787.5" y1="544" x2="787.5" y2="553" stroke="#c8c8c8" stroke-width="0.9" />
<line x1="825" y1="544" x2="825" y2="553" stroke="#c8c8c8" stroke-width="0.9" />
<line x1="860.5" y1="544" x2="860.5" y2="553" stroke="#c8c8c8" stroke-width="0.9" />
<line x1="897.5" y1="544" x2="897.5" y2="553" stroke="#c8c8c8" stroke-width="0.9" />
<text x="639" y="552.13" font-size="6.4" fill="#1a1a1a" text-anchor="start" font-family="Liberation Sans" font-weight="normal" textLength="9" lengthAdjust="spacingAndGlyphs" >001</text>
<text x="968" y="552.21" font-size="6.6" fill="#1a1a1a" text-anchor="start" font-family="Liberation Sans" font-weight="normal" textLength="28.75" lengthAdjust="spacingAndGlyphs" >4174/34 kb</text>
<g><rect x="935.0" y="547.0" width="1.5" height="6.0" fill="#8cb82c"/><rect x="937.1" y="546.8" width="1.5" height="6.2" fill="#8cb82c"/><rect x="939.2" y="546.6" width="1.5" height="6.4" fill="#8cb82c"/><rect x="941.3" y="546.4" width="1.5" height="6.6" fill="#8cb82c"/><rect x="943.4" y="546.2" width="1.5" height="6.8" fill="#8cb82c"/><rect x="945.5" y="546.0" width="1.5" height="7.0" fill="#8cb82c"/><path d="M935 553 L947.5 546.5 L947.5 553Z" fill="#2e6ea8"/></g>
<g><rect x="10" y="10" width="7" height="7" fill="#fff" stroke="#ddd" stroke-width="0.5"/><path d="M10.5 16.5 V12 L12 11 L13.5 12.5 L15 11 L16.5 12 V16.5Z" fill="#e87060"/><path d="M10.5 16.5 V14 L12 13.5 L13.5 14.5 L15 13.5 L16.5 14 V16.5Z" fill="#90c060"/></g>
<rect x="437" y="10.5" width="26" height="7" fill="#c8c8c8" filter="url(#blur2)"/>
<text x="463" y="16.67" font-size="7.6" fill="#2a2a2a" text-anchor="start" font-family="Liberation Sans" font-weight="normal" textLength="123" lengthAdjust="spacingAndGlyphs" >: Alpari Limited MT4 - [EURUSD,M1]</text>
<path d="M941.5 12.4 H947" stroke="#222" stroke-width="1"/><path d="M941 12.4 L943 11 V13.8Z M947.5 12.4 L945.5 11 V13.8Z" fill="#222"/>
<rect x="968.6" y="13.6" width="4.8" height="1.4" fill="#333" />
<rect x="982" y="11.6" width="4" height="4" fill="none" stroke="#333" stroke-width="1"/><path d="M983.5 11.6 V10.2 H987.4 V14 H986" fill="none" stroke="#333" stroke-width="0.8"/>
<rect x="992.3" y="8" width="24" height="10" fill="#c4c4c4" />
<path d="M1002 10.8 L1006.4 15.2 M1006.4 10.8 L1002 15.2" stroke="#fff" stroke-width="1.1"/>
<g><rect x="10.5" y="21.5" width="5" height="4" fill="#dceaf8" stroke="#4a86c8" stroke-width="0.7"/><rect x="12.8" y="24" width="5" height="4.5" fill="#dceaf8" stroke="#4a86c8" stroke-width="0.7"/></g>
<text x="22.9" y="27.88" font-size="6.8" fill="#a0a0a0" text-anchor="start" font-family="Liberation Sans" font-weight="normal" textLength="14.9" lengthAdjust="spacingAndGlyphs" >Файл</text>
<text x="47.2" y="27.88" font-size="6.8" fill="#a0a0a0" text-anchor="start" font-family="Liberation Sans" font-weight="normal" textLength="9.9" lengthAdjust="spacingAndGlyphs" >Вид</text>
<text x="66.6" y="27.88" font-size="6.8" fill="#a0a0a0" text-anchor="start" font-family="Liberation Sans" font-weight="normal" textLength="21.6" lengthAdjust="spacingAndGlyphs" >Вставка</text>
<text x="98.4" y="27.88" font-size="6.8" fill="#a0a0a0" text-anchor="start" font-family="Liberation Sans" font-weight="normal" textLength="22.8" lengthAdjust="spacingAndGlyphs" >Графики</text>
<text x="130.7" y="27.88" font-size="6.8" fill="#a0a0a0" text-anchor="start" font-family="Liberation Sans" font-weight="normal" textLength="19.4" lengthAdjust="spacingAndGlyphs" >Сервис</text>
<text x="159.7" y="27.88" font-size="6.8" fill="#a0a0a0" text-anchor="start" font-family="Liberation Sans" font-weight="normal" textLength="13.5" lengthAdjust="spacingAndGlyphs" >Окно</text>
<text x="182.8" y="27.88" font-size="6.8" fill="#a0a0a0" text-anchor="start" font-family="Liberation Sans" font-weight="normal" textLength="22.1" lengthAdjust="spacingAndGlyphs" >Справка</text>
<rect x="987.4" y="20.7" width="8.3" height="8.7" fill="#dbe9f7" stroke="#c5d9ee" stroke-width="0.6"/>
<rect x="997.8" y="20.7" width="8.3" height="8.7" fill="#dbe9f7" stroke="#c5d9ee" stroke-width="0.6"/>
<rect x="1007.9" y="20.7" width="8.3" height="8.7" fill="#dbe9f7" stroke="#c5d9ee" stroke-width="0.6"/>
<rect x="989.8" y="26.4" width="3" height="0.9" fill="#6c88a8" />
<rect x="1000.2" y="24" width="3" height="3" fill="none" stroke="#6c88a8" stroke-width="0.7"/><path d="M1001.4 24 V22.8 H1004.4 V25.8 H1003.2" fill="none" stroke="#6c88a8" stroke-width="0.6"/>
<path d="M1010.4 23.2 L1013.6 26.8 M1013.6 23.2 L1010.4 26.8" stroke="#6c88a8" stroke-width="0.8"/>
<rect x="8" y="31" width="241" height="13.600000000000001" fill="#f5f5f5" />
<line x1="8" y1="31.5" x2="249" y2="31.5" stroke="#ffffff" stroke-width="1" />
<line x1="248.5" y1="32" x2="248.5" y2="44.6" stroke="#d8d8d8" stroke-width="1" />
<line x1="8" y1="44.1" x2="249" y2="44.1" stroke="#dedede" stroke-width="1" />
<rect x="249.5" y="31" width="176.89999999999998" height="13.600000000000001" fill="#f5f5f5" />
<line x1="249.5" y1="31.5" x2="426.4" y2="31.5" stroke="#ffffff" stroke-width="1" />
<line x1="425.9" y1="32" x2="425.9" y2="44.6" stroke="#d8d8d8" stroke-width="1" />
<line x1="249.5" y1="44.1" x2="426.4" y2="44.1" stroke="#dedede" stroke-width="1" />
<rect x="8" y="45" width="160.2" height="13.799999999999997" fill="#f5f5f5" />
<line x1="8" y1="45.5" x2="168.2" y2="45.5" stroke="#ffffff" stroke-width="1" />
<line x1="167.7" y1="46" x2="167.7" y2="58.8" stroke="#d8d8d8" stroke-width="1" />
<line x1="8" y1="58.3" x2="168.2" y2="58.3" stroke="#dedede" stroke-width="1" />
<rect x="168.6" y="45" width="136.1" height="13.799999999999997" fill="#f5f5f5" />
<line x1="168.6" y1="45.5" x2="304.7" y2="45.5" stroke="#ffffff" stroke-width="1" />
<line x1="304.2" y1="46" x2="304.2" y2="58.8" stroke="#d8d8d8" stroke-width="1" />
<line x1="168.6" y1="58.3" x2="304.7" y2="58.3" stroke="#dedede" stroke-width="1" />
<line x1="10.2" y1="33" x2="10.2" y2="43" stroke="#c6c6c6" stroke-width="1" />
<line x1="11.1" y1="33" x2="11.1" y2="43" stroke="#ffffff" stroke-width="0.8" />
<line x1="252.7" y1="33" x2="252.7" y2="43" stroke="#c6c6c6" stroke-width="1" />
<line x1="253.6" y1="33" x2="253.6" y2="43" stroke="#ffffff" stroke-width="0.8" />
<line x1="10.2" y1="47" x2="10.2" y2="57" stroke="#c6c6c6" stroke-width="1" />
<line x1="11.1" y1="47" x2="11.1" y2="57" stroke="#ffffff" stroke-width="0.8" />
<line x1="170" y1="47" x2="170" y2="57" stroke="#c6c6c6" stroke-width="1" />
<line x1="170.9" y1="47" x2="170.9" y2="57" stroke="#ffffff" stroke-width="0.8" />
<rect x="14.5" y="34" width="7" height="6" fill="#eef4fb" stroke="#4f86c6" stroke-width="0.9"/><rect x="15.5" y="35" width="3" height="1.5" fill="#4f86c6"/>
<path d="M19 35.6 h2 v2.2 h2.2 v2 h-2.2 v2.2 h-2 v-2.2 h-2.2 v-2 h2.2z" fill="#10c020"/>
<path d="M25.4 37.7 H28.6 L27 39.5Z" fill="#222"/>
<rect x="33.5" y="34" width="6.5" height="5.5" fill="#eef4fb" stroke="#4f86c6" stroke-width="0.9"/><rect x="36" y="36.5" width="6.5" height="5.5" fill="#eef4fb" stroke="#4f86c6" stroke-width="0.9"/><rect x="37" y="38.5" width="3" height="2" fill="#4f86c6"/>
<path d="M45.0 37.7 H48.2 L46.6 39.5Z" fill="#222"/>
<line x1="52.3" y1="33" x2="52.3" y2="43" stroke="#c8c8c8" stroke-width="0.9" />
<rect x="57" y="34.3" width="8" height="7.5" rx="1" fill="#f4f8fc" stroke="#6a9ad0" stroke-width="0.9"/><circle cx="59.8" cy="36.8" r="1.3" fill="#28a028"/><circle cx="62.3" cy="39.3" r="1.5" fill="#e86a3c"/>
<path d="M75.8 33.8 L80 38.2 L75.8 42.6 L71.6 38.2Z" fill="none" stroke="#555" stroke-width="0.9"/><path d="M75.8 33 V43.4 M71 38.2 H80.6" stroke="#555" stroke-width="0.7"/>
<path d="M85.2 35 h3 l1 1 h3 v5 h-7z" fill="#f0d070" stroke="#c8a030" stroke-width="0.6"/><path d="M91.5 37.2 l0.9 2 2.1 0.2 -1.6 1.3 0.5 2.1 -1.9 -1.1 -1.9 1.1 0.5 -2.1 -1.6 -1.3 2.1 -0.2z" fill="#f2c020" stroke="#b88a10" stroke-width="0.4"/>
<rect x="101.5" y="34.2" width="8" height="7.6" rx="0.8" fill="#e8f0fa" stroke="#3a78c0" stroke-width="0.9"/><rect x="101.5" y="34.2" width="2" height="7.6" fill="#3a78c0"/>
<rect x="115.5" y="34" width="6.5" height="7.5" fill="#f4f4f4" stroke="#8aa0b8" stroke-width="0.8"/><circle cx="120.3" cy="38.6" r="2.2" fill="#dde8f4" stroke="#5a86b8" stroke-width="0.7"/><path d="M121.8 40.2 L124.6 42.6" stroke="#d4a020" stroke-width="1.2"/>
<line x1="129.5" y1="33" x2="129.5" y2="43" stroke="#c8c8c8" stroke-width="0.9" />
<path d="M134.5 34 h4.5 l2 2 v6 h-6.5z" fill="#f6f6f6" stroke="#8a8a8a" stroke-width="0.7"/><rect x="135.5" y="36" width="1.2" height="3.5" fill="#777"/>
<path d="M138.8 38.6 h1.8 v2 h2 v1.8 h-2 v2 h-1.8 v-2 h-2 v-1.8 h2z" fill="#1db41d"/>
<text x="144.8" y="40.95" font-size="7" fill="#1a1a1a" text-anchor="start" font-family="Liberation Sans" font-weight="normal" textLength="38.7" lengthAdjust="spacingAndGlyphs" >Новый Ордер</text>
<path d="M193.2 33.8 L197.6 38.2 L193.2 42.6 L188.8 38.2Z" fill="#f2cc40" stroke="#b89010" stroke-width="0.6"/><rect x="192.8" y="36" width="0.9" height="3.2" fill="#7a5a00"/><rect x="192.8" y="39.8" width="0.9" height="0.9" fill="#7a5a00"/>
<rect x="202.3" y="32.4" width="45.29999999999998" height="11.5" fill="#fbfbfb" stroke="#d0d0d0" stroke-width="0.8"/>
<path d="M203.8 37 q4 -3.5 8 -0.8 v4.5 h-8z" fill="#5a9ad8"/><rect x="204" y="38.5" width="7" height="3.5" fill="#f0c840"/><circle cx="210.8" cy="40.6" r="2.2" fill="#20a040" stroke="#fff" stroke-width="0.6"/>
<text x="215.8" y="40.95" font-size="7" fill="#1a1a1a" text-anchor="start" font-family="Liberation Sans" font-weight="normal" textLength="30.5" lengthAdjust="spacingAndGlyphs" >Советники</text>
<rect x="255.2" y="32.4" width="13.400000000000034" height="11.5" fill="#fbfbfb" stroke="#d0d0d0" stroke-width="0.8"/>
<path d="M258.5 34.5 V42.5 M258 42.3 H266" stroke="#555" stroke-width="0.8"/><path d="M262.5 35 V41 M261.5 36.2 h1 M262.5 39.5 h1" stroke="#1a9a3a" stroke-width="0.9"/>
<path d="M273 34.5 V42.5 M272.5 42.3 H281" stroke="#555" stroke-width="0.8"/><rect x="275.7" y="35.2" width="2.6" height="5" fill="#28b048" stroke="#106a20" stroke-width="0.5"/><path d="M277 34 V41.5" stroke="#106a20" stroke-width="0.5"/>
<path d="M287.5 34.5 V42.5 M287 42.3 H295.5" stroke="#555" stroke-width="0.8"/><path d="M288.5 40.5 Q291 34.5 294.5 40" fill="none" stroke="#1a9a3a" stroke-width="0.9"/>
<line x1="300.7" y1="33" x2="300.7" y2="43" stroke="#c8c8c8" stroke-width="0.9" />
<circle cx="308.2" cy="37.3" r="3.3" fill="#cfe4f8" stroke="#3a7cc8" stroke-width="1.1"/><path d="M306.4 37.3 H310.0" stroke="#3a7cc8" stroke-width="0.9"/><path d="M308.2 35.5 V39.1" stroke="#3a7cc8" stroke-width="0.9"/><path d="M310.5 39.6 L313.0 42.1" stroke="#d8a020" stroke-width="1.6"/>
<circle cx="322.8" cy="37.3" r="3.3" fill="#cfe4f8" stroke="#3a7cc8" stroke-width="1.1"/><path d="M321.0 37.3 H324.6" stroke="#3a7cc8" stroke-width="0.9"/><path d="M325.1 39.6 L327.6 42.1" stroke="#d8a020" stroke-width="1.6"/>
<line x1="333.3" y1="33" x2="333.3" y2="43" stroke="#c8c8c8" stroke-width="0.9" />
<rect x="335.2" y="32.4" width="13.300000000000011" height="11.5" fill="#fbfbfb" stroke="#d0d0d0" stroke-width="0.8"/>
<path d="M338.5 34.5 V42.5 M338 42.3 H346" stroke="#555" stroke-width="0.8"/><path d="M340.8 35.8 L344.6 38.4 L340.8 41Z" fill="#20a040"/>
<rect x="350.4" y="32.4" width="12.700000000000045" height="11.5" fill="#fbfbfb" stroke="#d0d0d0" stroke-width="0.8"/>
<path d="M353.5 34.5 V42.5 M353 42.3 H361.5 M355.5 35 V41.5" stroke="#555" stroke-width="0.8"/><path d="M357.5 34.5 V42" stroke="#3a7cc8" stroke-width="0.8"/><path d="M358 37.5 L360.5 38.8 L358 40Z" fill="#e05030"/>
<line x1="365.7" y1="33" x2="365.7" y2="43" stroke="#c8c8c8" stroke-width="0.9" />
<path d="M370.5 34.2 h4.5 l2 2 v6 h-6.5z" fill="#f6f6f6" stroke="#8a8a8a" stroke-width="0.7"/><path d="M371.8 40 l1.5 -2 1.5 1.2" fill="none" stroke="#666" stroke-width="0.6"/>
<path d="M375 38.6 h1.8 v2 h2 v1.8 h-2 v2 h-1.8 v-2 h-2 v-1.8 h2z" fill="#1db41d"/>
<path d="M380.79999999999995 37.7 H384.0 L382.4 39.5Z" fill="#222"/>
<circle cx="393.6" cy="38.3" r="3.9" fill="#eaf2fb" stroke="#2a6cc0" stroke-width="1.3"/><path d="M393.3 36 V38.6 L395 39.8" fill="none" stroke="#444" stroke-width="0.6"/>
<path d="M400.29999999999995 37.7 H403.5 L401.9 39.5Z" fill="#222"/>
<rect x="409.3" y="34.6" width="8.2" height="7.4" fill="#f4f8fc" stroke="#3a7cc8" stroke-width="1"/><path d="M410.5 38 q2 -1.5 3.5 -0.5 t3 -0.5" fill="none" stroke="#d04a2a" stroke-width="0.7"/><path d="M410.5 40.3 h6" stroke="#28a040" stroke-width="0.8"/>
<path d="M419.79999999999995 37.7 H423.0 L421.4 39.5Z" fill="#222"/>
<rect x="12.7" y="46.2" width="13.3" height="12.599999999999994" fill="#fbfbfb" stroke="#d0d0d0" stroke-width="0.8"/>
<path d="M17.8 48.3 V56.2 L19.6 54.4 L21 57.3 L22 56.8 L20.7 54 L23.2 53.8Z" fill="#333"/>
<path d="M34 48.5 V56.5 M30 52.5 H38" stroke="#8a8a8a" stroke-width="0.9"/>
<line x1="42.5" y1="47" x2="42.5" y2="57" stroke="#c8c8c8" stroke-width="0.9" />
<path d="M51.4 48.8 V56" stroke="#666" stroke-width="0.9"/>
<path d="M63.5 52.4 H70" stroke="#666" stroke-width="0.9"/>
<path d="M77.6 56 L85 49" stroke="#777" stroke-width="0.9"/>
<path d="M92.5 55 L98 49.3 M94.5 56.5 L99.8 50.8 M93.5 53 L96.8 55.8" stroke="#777" stroke-width="0.8"/><text x="98.2" y="57.5" font-size="3" fill="#555" font-family="Liberation Sans">e</text>
<path d="M107 48.8 H114 M107 50.8 H114 M107 52.8 H114 M107 54.8 H112" stroke="#999" stroke-width="0.7"/><path d="M112.2 55.5 L113.5 57 L114.5 55.5" fill="none" stroke="#666" stroke-width="0.6"/>
<text x="121.6" y="54.63" font-size="6.4" fill="#555" text-anchor="start" font-family="Liberation Sans" font-weight="normal" textLength="4.6" lengthAdjust="spacingAndGlyphs" >A</text>
<rect x="136.8" y="48.5" width="7" height="7.5" fill="none" stroke="#999" stroke-width="0.7"/><path d="M138.3 50 H142.3 M140.3 50 V54.8" stroke="#444" stroke-width="0.9"/>
<path d="M151.5 50 L154 51.2 L151.5 52.4Z M155.5 52.4 L158.5 53.6 L155.5 54.8Z" fill="#444"/><path d="M150.5 51.2 H153 M154.5 53.6 H157" stroke="#444" stroke-width="0.7"/>
<path d="M161.20000000000002 51.7 H164.4 L162.8 53.5Z" fill="#222"/>
<rect x="172.7" y="46.4" width="12.700000000000017" height="12.399999999999999" fill="#fbfbfb" stroke="#d0d0d0" stroke-width="0.8"/>
<text x="178.4" y="54.99" font-size="6" fill="#4a4a4a" text-anchor="middle" font-family="Liberation Sans" font-weight="normal" textLength="6.6" lengthAdjust="spacingAndGlyphs" >M1</text>
<text x="193.4" y="54.99" font-size="6" fill="#4a4a4a" text-anchor="middle" font-family="Liberation Sans" font-weight="normal" textLength="6.6" lengthAdjust="spacingAndGlyphs" >M5</text>
<text x="208.2" y="54.99" font-size="6" fill="#4a4a4a" text-anchor="middle" font-family="Liberation Sans" font-weight="normal" textLength="9.4" lengthAdjust="spacingAndGlyphs" >M15</text>
<text x="222.8" y="54.99" font-size="6" fill="#4a4a4a" text-anchor="middle" font-family="Liberation Sans" font-weight="normal" textLength="9.6" lengthAdjust="spacingAndGlyphs" >M30</text>
<text x="237.4" y="54.99" font-size="6" fill="#4a4a4a" text-anchor="middle" font-family="Liberation Sans" font-weight="normal" textLength="6.4" lengthAdjust="spacingAndGlyphs" >H1</text>
<text x="252" y="54.99" font-size="6" fill="#4a4a4a" text-anchor="middle" font-family="Liberation Sans" font-weight="normal" textLength="6.6" lengthAdjust="spacingAndGlyphs" >H4</text>
<text x="267.3" y="54.99" font-size="6" fill="#4a4a4a" text-anchor="middle" font-family="Liberation Sans" font-weight="normal" textLength="6.6" lengthAdjust="spacingAndGlyphs" >D1</text>
<text x="282.5" y="54.99" font-size="6" fill="#4a4a4a" text-anchor="middle" font-family="Liberation Sans" font-weight="normal" textLength="7.2" lengthAdjust="spacingAndGlyphs" >W1</text>
<text x="296.5" y="54.99" font-size="6" fill="#4a4a4a" text-anchor="middle" font-family="Liberation Sans" font-weight="normal" textLength="7.4" lengthAdjust="spacingAndGlyphs" >MN</text>
<line x1="304.7" y1="46" x2="304.7" y2="58" stroke="#c8c8c8" stroke-width="0.9" />
<rect x="1002.5" y="31.7" width="13.5" height="11.9" fill="#f4f4f4" stroke="#dcdcdc" stroke-width="0.7"/>
<path d="M1005.5 34 h8.2 v5.6 h-4.3 l-1.8 1.8 v-1.8 h-2.1z" fill="#4a76c0"/>
<text x="1009.6" y="38.94" font-size="5.6" fill="#ffffff" text-anchor="middle" font-family="Liberation Sans" font-weight="bold" >4</text>
<rect x="176.5" y="80" width="404.7" height="203.5" fill="#5aabb8" />
<rect x="181" y="96" width="396" height="183.7" fill="#f0f0f0" />
<text x="366.8" y="90.72" font-size="7.2" fill="#24424b" text-anchor="start" font-family="Liberation Sans" font-weight="normal" textLength="23.6" lengthAdjust="spacingAndGlyphs" >Ордер</text>
<path d="M502 85.8 H505.3" stroke="#1c2c30" stroke-width="0.6"/><path d="M500.9 85.8 L502.8 84.5 V87.1Z M506.4 85.8 L504.5 84.5 V87.1Z" fill="#1c2c30"/>
<rect x="530.8" y="86.8" width="4.5" height="1.3" fill="#24424b" />
<rect x="544.6" y="84.5" width="4.8" height="3.6" fill="none" stroke="#3a6a74" stroke-width="0.8"/>
<rect x="553.5" y="80.7" width="23.5" height="9.9" fill="#c9504f" />
<path d="M563.6 84 L567.4 87.6 M567.4 84 L563.6 87.6" stroke="#fff" stroke-width="1.1"/>
<rect x="185" y="103" width="156.5" height="171" fill="#ffffff" />
<path d="M342 103.4 H185.4 V274.3" fill="none" stroke="#8c8c8c" stroke-width="0.9"/>
<rect x="187.3" y="105.6" width="131.6" height="167.6" fill="#ffffff" stroke="#505050" stroke-width="0.9"/>
<line x1="205" y1="106.5" x2="205" y2="272.5" stroke="#c4c4c4" stroke-width="0.7" stroke-dasharray="1.2 1.6"/>
<line x1="221.4" y1="106.5" x2="221.4" y2="272.5" stroke="#c4c4c4" stroke-width="0.7" stroke-dasharray="1.2 1.6"/>
<line x1="238.7" y1="106.5" x2="238.7" y2="272.5" stroke="#c4c4c4" stroke-width="0.7" stroke-dasharray="1.2 1.6"/>
<line x1="255.5" y1="106.5" x2="255.5" y2="272.5" stroke="#c4c4c4" stroke-width="0.7" stroke-dasharray="1.2 1.6"/>
<line x1="272" y1="106.5" x2="272" y2="272.5" stroke="#c4c4c4" stroke-width="0.7" stroke-dasharray="1.2 1.6"/>
<line x1="288.9" y1="106.5" x2="288.9" y2="272.5" stroke="#c4c4c4" stroke-width="0.7" stroke-dasharray="1.2 1.6"/>
<line x1="305.8" y1="106.5" x2="305.8" y2="272.5" stroke="#c4c4c4" stroke-width="0.7" stroke-dasharray="1.2 1.6"/>
<line x1="188" y1="121.2" x2="318.5" y2="121.2" stroke="#c4c4c4" stroke-width="0.7" stroke-dasharray="1.2 1.6"/>
<line x1="318.9" y1="121.2" x2="320.5" y2="121.2" stroke="#555" stroke-width="0.7" />
<line x1="188" y1="137.87" x2="318.5" y2="137.87" stroke="#c4c4c4" stroke-width="0.7" stroke-dasharray="1.2 1.6"/>
<line x1="318.9" y1="137.87" x2="320.5" y2="137.87" stroke="#555" stroke-width="0.7" />
<line x1="188" y1="154.54000000000002" x2="318.5" y2="154.54000000000002" stroke="#c4c4c4" stroke-width="0.7" stroke-dasharray="1.2 1.6"/>
<line x1="318.9" y1="154.54000000000002" x2="320.5" y2="154.54000000000002" stroke="#555" stroke-width="0.7" />
<line x1="188" y1="171.21" x2="318.5" y2="171.21" stroke="#c4c4c4" stroke-width="0.7" stroke-dasharray="1.2 1.6"/>
<line x1="318.9" y1="171.21" x2="320.5" y2="171.21" stroke="#555" stroke-width="0.7" />
<line x1="188" y1="187.88" x2="318.5" y2="187.88" stroke="#c4c4c4" stroke-width="0.7" stroke-dasharray="1.2 1.6"/>
<line x1="318.9" y1="187.88" x2="320.5" y2="187.88" stroke="#555" stroke-width="0.7" />
<line x1="188" y1="204.55" x2="318.5" y2="204.55" stroke="#c4c4c4" stroke-width="0.7" stroke-dasharray="1.2 1.6"/>
<line x1="318.9" y1="204.55" x2="320.5" y2="204.55" stroke="#555" stroke-width="0.7" />
<line x1="188" y1="221.22000000000003" x2="318.5" y2="221.22000000000003" stroke="#c4c4c4" stroke-width="0.7" stroke-dasharray="1.2 1.6"/>
<line x1="318.9" y1="221.22000000000003" x2="320.5" y2="221.22000000000003" stroke="#555" stroke-width="0.7" />
<line x1="188" y1="237.89000000000001" x2="318.5" y2="237.89000000000001" stroke="#c4c4c4" stroke-width="0.7" stroke-dasharray="1.2 1.6"/>
<line x1="318.9" y1="237.89000000000001" x2="320.5" y2="237.89000000000001" stroke="#555" stroke-width="0.7" />
<line x1="188" y1="254.56" x2="318.5" y2="254.56" stroke="#c4c4c4" stroke-width="0.7" stroke-dasharray="1.2 1.6"/>
<line x1="318.9" y1="254.56" x2="320.5" y2="254.56" stroke="#555" stroke-width="0.7" />
<line x1="188" y1="271.23" x2="318.5" y2="271.23" stroke="#c4c4c4" stroke-width="0.7" stroke-dasharray="1.2 1.6"/>
<line x1="318.9" y1="271.23" x2="320.5" y2="271.23" stroke="#555" stroke-width="0.7" />
<text x="321.8" y="123.24" font-size="5.6" fill="#1a1a1a" text-anchor="start" font-family="Liberation Sans" font-weight="normal" textLength="16.9" lengthAdjust="spacingAndGlyphs" >1.30664</text>
<text x="321.8" y="139.91" font-size="5.6" fill="#1a1a1a" text-anchor="start" font-family="Liberation Sans" font-weight="normal" textLength="16.9" lengthAdjust="spacingAndGlyphs" >1.30653</text>
<text x="321.8" y="156.58" font-size="5.6" fill="#1a1a1a" text-anchor="start" font-family="Liberation Sans" font-weight="normal" textLength="16.9" lengthAdjust="spacingAndGlyphs" >1.30642</text>
<text x="321.8" y="173.25" font-size="5.6" fill="#1a1a1a" text-anchor="start" font-family="Liberation Sans" font-weight="normal" textLength="16.9" lengthAdjust="spacingAndGlyphs" >1.30631</text>
<text x="321.8" y="189.92" font-size="5.6" fill="#1a1a1a" text-anchor="start" font-family="Liberation Sans" font-weight="normal" textLength="16.9" lengthAdjust="spacingAndGlyphs" >1.30620</text>
<text x="321.8" y="206.59" font-size="5.6" fill="#1a1a1a" text-anchor="start" font-family="Liberation Sans" font-weight="normal" textLength="16.9" lengthAdjust="spacingAndGlyphs" >1.30609</text>
<text x="321.8" y="223.26" font-size="5.6" fill="#1a1a1a" text-anchor="start" font-family="Liberation Sans" font-weight="normal" textLength="16.9" lengthAdjust="spacingAndGlyphs" >1.30598</text>
<text x="321.8" y="239.93" font-size="5.6" fill="#1a1a1a" text-anchor="start" font-family="Liberation Sans" font-weight="normal" textLength="16.9" lengthAdjust="spacingAndGlyphs" >1.30587</text>
<text x="321.8" y="256.60" font-size="5.6" fill="#1a1a1a" text-anchor="start" font-family="Liberation Sans" font-weight="normal" textLength="16.9" lengthAdjust="spacingAndGlyphs" >1.30577</text>
<text x="321.8" y="273.27" font-size="5.6" fill="#1a1a1a" text-anchor="start" font-family="Liberation Sans" font-weight="normal" textLength="16.9" lengthAdjust="spacingAndGlyphs" >1.30566</text>
<text x="188.8" y="110.99" font-size="6" fill="#1a1a1a" text-anchor="start" font-family="Liberation Sans" font-weight="normal" textLength="20.2" lengthAdjust="spacingAndGlyphs" >EURUSD</text>
<path d="M187.4 227.0 L189.5 214.0 L191.7 224.9 L193.8 200.0 L196.6 193.0 L198.5 180.5 L200.2 186.0 L203.0 190.0 L205.2 206.0 L208.0 232.0 L209.4 228.4 L211.6 229.8 L213.0 212.0 L214.4 175.6 L216.3 193.0 L218.0 178.0 L219.8 190.0 L221.5 212.8 L224.0 210.0 L227.2 235.5 L230.7 268.2 L234.3 244.0 L237.1 210.0 L239.3 214.0 L241.1 188.0 L242.8 198.0 L245.0 212.0 L247.0 214.2 L249.2 217.0 L251.3 197.0 L252.1 194.9 L254.3 200.6 L257.8 206.3 L260.0 189.2 L262.0 175.0 L263.5 168.2 L265.6 171.7 L268.5 158.2 L271.3 131.2 L272.7 121.3 L274.9 131.2 L276.3 137.0 L277.7 146.9 L280.5 176.7 L281.3 207.7 L283.4 199.9 L286.2 205.5 L288.3 221.9 L292.6 229.0 L295.5 241.8 L296.9 253.1 L299.0 244.6 L301.0 253.1 L304.0 231.8 L305.4 241.8 L318.9 241.8" fill="none" stroke="#f47c7c" stroke-width="0.85" stroke-linejoin="round"/>
<path d="M187.4 211.0 L189.5 201.0 L191.4 211.0 L193.8 185.5 L195.2 179.0 L196.6 180.5 L198.5 165.0 L200.2 170.0 L203.0 175.0 L205.2 192.6 L207.0 211.0 L208.0 222.5 L208.9 214.2 L210.9 211.4 L213.0 198.3 L214.4 162.0 L216.3 180.0 L218.0 165.6 L219.8 178.4 L221.5 194.0 L223.6 197.0 L225.8 211.0 L227.2 228.4 L230.3 254.0 L232.9 242.6 L235.7 214.2 L237.1 191.2 L239.3 197.0 L241.1 173.4 L242.8 185.5 L245.0 198.3 L247.0 192.6 L248.5 202.5 L251.3 182.7 L254.3 186.4 L257.8 192.0 L259.2 180.0 L261.4 165.3 L264.2 156.8 L266.3 161.0 L267.8 149.7 L269.2 137.0 L271.3 115.6 L272.4 110.0 L274.1 114.2 L275.3 112.0 L277.0 131.2 L278.4 146.9 L279.1 152.6 L280.5 168.2 L281.3 189.2 L283.4 181.4 L285.5 189.2 L286.9 204.8 L290.5 207.7 L292.6 210.5 L294.0 221.9 L296.9 238.2 L299.0 235.4 L300.4 240.3 L304.0 217.6 L305.4 229.7 L318.9 229.7" fill="none" stroke="#3576f0" stroke-width="0.9" stroke-linejoin="round"/>
<rect x="319.5" y="227" width="21.7" height="5.8" fill="#1f6ff2" />
<text x="321.8" y="231.87" font-size="5.4" fill="#ffffff" text-anchor="start" font-family="Liberation Sans" font-weight="normal" textLength="16.9" lengthAdjust="spacingAndGlyphs" >1.30594</text>
<rect x="319.5" y="239.2" width="21.7" height="5.4" fill="#f26464" />
<text x="321.8" y="243.87" font-size="5.4" fill="#ffffff" text-anchor="start" font-family="Liberation Sans" font-weight="normal" textLength="16.9" lengthAdjust="spacingAndGlyphs" >1.30586</text>
<text x="372.1" y="111.31" font-size="6.6" fill="#1e1e1e" text-anchor="start" font-family="Liberation Sans" font-weight="normal" textLength="21" lengthAdjust="spacingAndGlyphs" >Символ:</text>
<text x="373.90000000000003" y="124.41" font-size="6.6" fill="#1e1e1e" text-anchor="start" font-family="Liberation Sans" font-weight="normal" textLength="19.2" lengthAdjust="spacingAndGlyphs" >Объем:</text>
<text x="364.3" y="138.11" font-size="6.6" fill="#1e1e1e" text-anchor="start" font-family="Liberation Sans" font-weight="normal" textLength="28.8" lengthAdjust="spacingAndGlyphs" >Стоп Лосс:</text>
<text x="356.0" y="152.01" font-size="6.6" fill="#1e1e1e" text-anchor="start" font-family="Liberation Sans" font-weight="normal" textLength="37.1" lengthAdjust="spacingAndGlyphs" >Комментарий:</text>
<text x="382.20000000000005" y="166.01" font-size="6.6" fill="#1e1e1e" text-anchor="start" font-family="Liberation Sans" font-weight="normal" textLength="10.9" lengthAdjust="spacingAndGlyphs" >Тип:</text>
<text x="471.1" y="138.11" font-size="6.6" fill="#1e1e1e" text-anchor="start" font-family="Liberation Sans" font-weight="normal" textLength="37.1" lengthAdjust="spacingAndGlyphs" >Тейк Профит:</text>
<rect x="398.2" y="103.1" width="169.5" height="10.5" fill="#e6e6e6" stroke="#acacac" stroke-width="0.8"/>
<text x="399.9" y="111.31" font-size="6.6" fill="#1a1a1a" text-anchor="start" font-family="Liberation Sans" font-weight="normal" textLength="67.4" lengthAdjust="spacingAndGlyphs" >EURUSD, Euro vs US Dollar</text>
<path d="M561.3000000000001 107.6 L563.1 109.5 L564.9 107.6" fill="none" stroke="#333" stroke-width="0.9"/>
<rect x="398.2" y="116.5" width="54.4" height="11.2" fill="#ffffff" stroke="#acacac" stroke-width="0.8"/>
<text x="400.8" y="124.41" font-size="6.6" fill="#1a1a1a" text-anchor="start" font-family="Liberation Sans" font-weight="normal" textLength="11.5" lengthAdjust="spacingAndGlyphs" >0.50</text>
<path d="M446.9 121 L448.7 122.9 L450.5 121" fill="none" stroke="#333" stroke-width="0.9"/>
<rect x="398.2" y="130.6" width="54.400000000000034" height="10.300000000000011" fill="#ffffff" stroke="#acacac" stroke-width="0.8"/>
<rect x="444.3" y="131.1" width="7.800000000000011" height="9.300000000000011" fill="#e8e8e8" />
<line x1="444.3" y1="130.6" x2="444.3" y2="140.9" stroke="#c8c8c8" stroke-width="0.6" />
<line x1="444.3" y1="135.75" x2="452.6" y2="135.75" stroke="#c8c8c8" stroke-width="0.5" />
<path d="M447.15000000000003 134.1 L448.45000000000005 132.6 L449.75000000000006 134.1Z M447.15000000000003 137.4 L448.45000000000005 138.9 L449.75000000000006 137.4Z" fill="#333"/>
<text x="420" y="138.16" font-size="6.6" fill="#1a1a1a" text-anchor="start" font-family="Liberation Sans" font-weight="normal" textLength="21" lengthAdjust="spacingAndGlyphs" >0.00000</text>
<rect x="512.3" y="130.3" width="54.30000000000007" height="10.299999999999983" fill="#ffffff" stroke="#acacac" stroke-width="0.8"/>
<rect x="558.4" y="130.8" width="7.7000000000000455" height="9.299999999999983" fill="#e8e8e8" />
<line x1="558.4" y1="130.3" x2="558.4" y2="140.6" stroke="#c8c8c8" stroke-width="0.6" />
<line x1="558.4" y1="135.45" x2="566.6" y2="135.45" stroke="#c8c8c8" stroke-width="0.5" />
<path d="M561.2 133.8 L562.5 132.3 L563.8 133.8Z M561.2 137.1 L562.5 138.6 L563.8 137.1Z" fill="#333"/>
<text x="534.5" y="137.86" font-size="6.6" fill="#1a1a1a" text-anchor="start" font-family="Liberation Sans" font-weight="normal" textLength="21" lengthAdjust="spacingAndGlyphs" >0.00000</text>
<rect x="398.2" y="144.3" width="169.5" height="10.2" fill="#ffffff" stroke="#acacac" stroke-width="0.8"/>
<rect x="398.2" y="158.1" width="169.5" height="10.6" fill="#e6e6e6" stroke="#acacac" stroke-width="0.8"/>
<text x="399.9" y="165.91" font-size="6.6" fill="#1a1a1a" text-anchor="start" font-family="Liberation Sans" font-weight="normal" textLength="68.4" lengthAdjust="spacingAndGlyphs" >Немедленное исполнение</text>
<path d="M561.3000000000001 162.3 L563.1 164.20000000000002 L564.9 162.3" fill="none" stroke="#333" stroke-width="0.9"/>
<rect x="346.5" y="176.7" width="224.5" height="98.5" fill="none" stroke="#dcdcdc" stroke-width="0.8"/>
<rect x="349.5" y="173" width="71" height="7" fill="#f0f0f0" />
<text x="350.9" y="179.41" font-size="6.6" fill="#1e1e3a" text-anchor="start" font-family="Liberation Sans" font-weight="normal" textLength="67.9" lengthAdjust="spacingAndGlyphs" >Немедленное исполнение</text>
<text x="403.9" y="201.20" font-size="14" fill="#1a1a1a" text-anchor="start" font-family="Liberation Sans" font-weight="normal" textLength="41.3" lengthAdjust="spacingAndGlyphs" stroke="#1a1a1a" stroke-width="0.12">1.3058</text>
<text x="445.9" y="201.05" font-size="9.2" fill="#1a1a1a" text-anchor="start" font-family="Liberation Sans" font-weight="normal" textLength="5.3" lengthAdjust="spacingAndGlyphs" stroke="#1a1a1a" stroke-width="0.12">6</text>
<text x="456.5" y="202.09" font-size="14.5" fill="#1a1a1a" text-anchor="start" font-family="Liberation Sans" font-weight="normal" textLength="4.5" lengthAdjust="spacingAndGlyphs" stroke="#1a1a1a" stroke-width="0.1">/</text>
<text x="466.6" y="201.20" font-size="14" fill="#1a1a1a" text-anchor="start" font-family="Liberation Sans" font-weight="normal" textLength="40.7" lengthAdjust="spacingAndGlyphs" stroke="#1a1a1a" stroke-width="0.12">1.3059</text>
<text x="508" y="201.05" font-size="9.2" fill="#1a1a1a" text-anchor="start" font-family="Liberation Sans" font-weight="normal" textLength="5.7" lengthAdjust="spacingAndGlyphs" stroke="#1a1a1a" stroke-width="0.12">4</text>
<rect x="355.3" y="212.3" width="97.2" height="10.2" fill="#f77c7c" stroke="#b4b4b4" stroke-width="0.8"/>
<text x="403.7" y="219.91" font-size="6.6" fill="#4a2020" text-anchor="middle" font-family="Liberation Sans" font-weight="normal" textLength="9" lengthAdjust="spacingAndGlyphs" >Sell</text>
<rect x="465.3" y="212.3" width="97.7" height="10.2" fill="#9cbdfc" stroke="#b4b4b4" stroke-width="0.8"/>
<text x="513.7" y="219.91" font-size="6.6" fill="#20203a" text-anchor="middle" font-family="Liberation Sans" font-weight="normal" textLength="9.5" lengthAdjust="spacingAndGlyphs" >Buy</text>
<rect x="355.3" y="227" width="207.7" height="10.6" fill="#efefef" stroke="#dcdcdc" stroke-width="0.8"/>
<rect x="354.4" y="246.1" width="6.4" height="6.5" fill="#ffffff" stroke="#6a6a6a" stroke-width="0.8"/>
<path d="M355.4 249.2 L357.3 251.6 L360.4 245.8" fill="none" stroke="#111" stroke-width="1.25"/>
<text x="362.6" y="252.01" font-size="6.6" fill="#1e1e3a" text-anchor="start" font-family="Liberation Sans" font-weight="normal" textLength="169.3" lengthAdjust="spacingAndGlyphs" >Использовать максимальное отклонение от запрошенной цены</text>
<text x="387.2" y="266.11" font-size="6.6" fill="#1e1e1e" text-anchor="start" font-family="Liberation Sans" font-weight="normal" textLength="73.2" lengthAdjust="spacingAndGlyphs" >Максимальное отклонение:</text>
<rect x="466.2" y="258.4" width="31.3" height="11.1" fill="#ffffff" stroke="#b0b0b0" stroke-width="0.8"/>
<text x="469.6" y="266.21" font-size="6.6" fill="#1a1a1a" text-anchor="start" font-family="Liberation Sans" font-weight="normal" textLength="5.6" lengthAdjust="spacingAndGlyphs" >10</text>
<path d="M491.2 262.6 L493 264.5 L494.8 262.6" fill="none" stroke="#333" stroke-width="0.9"/>
<text x="500" y="266.11" font-size="6.6" fill="#1e1e3a" text-anchor="start" font-family="Liberation Sans" font-weight="normal" textLength="21.9" lengthAdjust="spacingAndGlyphs" >пунктов</text>
</svg></body></html>
